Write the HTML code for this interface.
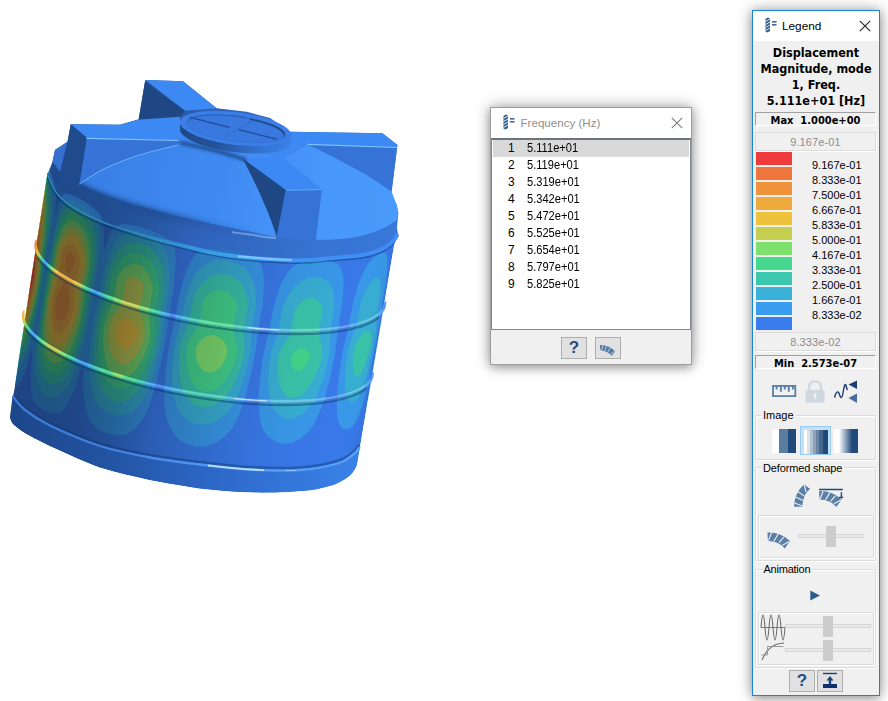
<!DOCTYPE html>
<html><head><meta charset="utf-8"><title>Legend</title>
<style>
html,body{margin:0;padding:0;background:#fff;}
body{width:888px;height:701px;position:relative;overflow:hidden;font-family:"Liberation Sans",sans-serif;}
.dlg{position:absolute;background:#f0f0f0;box-sizing:border-box;box-shadow:0 0 14px rgba(0,0,0,0.38),0 3px 8px rgba(0,0,0,0.18);}
.dlg *{box-sizing:border-box;}
.tbar{position:absolute;left:0;top:0;right:0;background:#fff;}
.ticon{position:absolute;}
.ttl{position:absolute;font-size:12px;line-height:16px;white-space:nowrap;}
.list{position:absolute;background:#fff;border:1px solid #828790;border-top:2px solid #6e737c;}
.row{position:absolute;left:1px;width:196px;height:17px;font-size:12px;line-height:17px;color:#000;}
.row.sel{background:#d9d9d9;}
.row .n{position:absolute;left:15px;}
.row .v{position:absolute;left:33.5px;transform:scaleX(0.925);transform-origin:0 50%;}
.btn{position:absolute;width:26px;height:22px;border:1px solid #adadad;background:#e1e1e1;}
.btn .q{position:absolute;left:0;width:24px;top:0;text-align:center;font-weight:bold;font-size:17px;line-height:20px;color:#1f4e82;}
.lt{position:absolute;left:0;width:126px;text-align:center;font-family:"DejaVu Sans Condensed","DejaVu Sans","Liberation Sans",sans-serif;font-weight:bold;font-size:12.5px;line-height:16px;color:#000;}
.sunk{position:absolute;border-top:1px solid #a0a0a0;border-left:1px solid #a0a0a0;border-right:1px solid #fff;border-bottom:1px solid #fff;}
.mm{position:absolute;text-align:center;font-family:"DejaVu Sans Condensed","DejaVu Sans","Liberation Sans",sans-serif;font-weight:bold;font-size:11px;line-height:12px;color:#000;white-space:nowrap;}
.edit{position:absolute;border:1px solid #dcdcdc;box-shadow:1px 1px 0 #fff;text-align:center;font-size:11px;letter-spacing:0.13px;line-height:19px;color:#8c8c8c;}
.sw{position:absolute;left:3px;width:36px;height:13px;}
.lb{position:absolute;left:59px;font-size:11px;line-height:13px;color:#000;white-space:nowrap;}
.grp{position:absolute;border:1px solid #dcdcdc;box-shadow:1px 1px 0 #fff, inset 1px 1px 0 #fff;}
.gl{position:absolute;font-size:11px;line-height:13px;background:#f0f0f0;padding:0 2px 0 1px;color:#000;white-space:nowrap;}
.trk{position:absolute;height:4px;background:#e7eaea;border:1px solid #d6d6d6;}
.thm{position:absolute;width:10px;height:21px;background:#cccccc;}
</style></head>
<body>
<svg width="888" height="701" viewBox="0 0 888 701" style="position:absolute;left:0;top:0;filter:blur(0.35px)">
<defs>
<clipPath id="cb"><path d="M47.5,173 L10,417.5 C10.5,418.6 10.5,421.4 13.0,424.0 C15.5,426.6 18.8,429.3 25.0,433.0 C31.2,436.7 37.5,440.2 50.0,446.0 C62.5,451.8 83.3,461.8 100.0,467.5 C116.7,473.2 133.3,476.5 150.0,480.0 C166.7,483.5 185.0,486.5 200.0,488.5 C215.0,490.5 227.5,491.3 240.0,492.0 C252.5,492.7 262.9,492.8 275.0,492.5 C287.1,492.2 302.3,491.4 312.5,490.0 C322.7,488.6 329.8,486.4 336.0,484.0 C342.2,481.6 346.6,478.5 350.0,475.5 C353.4,472.5 355.1,469.4 356.5,466.0 C357.9,462.6 358.2,456.8 358.5,455.0 L360,447 L394,246 L397.5,234 Z"/></clipPath>
<filter id="b1" x="-20%" y="-20%" width="140%" height="140%"><feGaussianBlur stdDeviation="0.6"/></filter>
<filter id="dk" x="0" y="0" width="100%" height="100%"><feColorMatrix type="matrix" values="0.56 0 0 0 0  0 0.56 0 0 0  0 0 0.56 0 0  0 0 0 1 0"/></filter>
<filter id="b2" x="-20%" y="-20%" width="140%" height="140%"><feGaussianBlur stdDeviation="1.5"/></filter>
<filter id="b3" x="-20%" y="-20%" width="140%" height="140%"><feGaussianBlur stdDeviation="2.5"/></filter>
<linearGradient id="shade" gradientUnits="userSpaceOnUse" x1="36.2" y1="242.8" x2="384.8" y2="304.2"><stop offset="0.0000" stop-color="#000814" stop-opacity="0.48"/><stop offset="0.1017" stop-color="#000814" stop-opacity="0.49"/><stop offset="0.1921" stop-color="#000814" stop-opacity="0.47"/><stop offset="0.2966" stop-color="#000814" stop-opacity="0.40"/><stop offset="0.4124" stop-color="#000814" stop-opacity="0.27"/><stop offset="0.5424" stop-color="#000814" stop-opacity="0.18"/><stop offset="0.6695" stop-color="#000814" stop-opacity="0.10"/><stop offset="0.7853" stop-color="#000814" stop-opacity="0.05"/><stop offset="0.8955" stop-color="#000814" stop-opacity="0.03"/><stop offset="0.9661" stop-color="#000814" stop-opacity="0.03"/><stop offset="1.0000" stop-color="#000814" stop-opacity="0.07"/></linearGradient>
<linearGradient id="ribg1" gradientUnits="userSpaceOnUse" x1="34.7" y1="242.5" x2="386.3" y2="304.5"><stop offset="0.0000" stop-color="#ee3b3b"/><stop offset="0.0000" stop-color="#ee3b3b"/><stop offset="0.0005" stop-color="#ee753c"/><stop offset="0.0003" stop-color="#ee753c"/><stop offset="0.0043" stop-color="#ee933c"/><stop offset="0.0044" stop-color="#ee933c"/><stop offset="0.0084" stop-color="#eeaa3c"/><stop offset="0.0079" stop-color="#eeaa3c"/><stop offset="0.0119" stop-color="#eec23c"/><stop offset="0.0119" stop-color="#eec23c"/><stop offset="0.0159" stop-color="#c4cf50"/><stop offset="0.0166" stop-color="#c4cf50"/><stop offset="0.0206" stop-color="#80e06e"/><stop offset="0.0205" stop-color="#80e06e"/><stop offset="0.0245" stop-color="#46d88e"/><stop offset="0.0247" stop-color="#46d88e"/><stop offset="0.0287" stop-color="#3cc8ae"/><stop offset="0.0292" stop-color="#3cc8ae"/><stop offset="0.0332" stop-color="#3ab2d8"/><stop offset="0.0341" stop-color="#3ab2d8"/><stop offset="0.0381" stop-color="#3a9cee"/><stop offset="0.0410" stop-color="#3a9cee"/><stop offset="0.0450" stop-color="#3ab2d8"/><stop offset="0.0447" stop-color="#3ab2d8"/><stop offset="0.0487" stop-color="#3cc8ae"/><stop offset="0.0505" stop-color="#3cc8ae"/><stop offset="0.0545" stop-color="#46d88e"/><stop offset="0.0545" stop-color="#46d88e"/><stop offset="0.0585" stop-color="#80e06e"/><stop offset="0.0608" stop-color="#80e06e"/><stop offset="0.0648" stop-color="#c4cf50"/><stop offset="0.0674" stop-color="#c4cf50"/><stop offset="0.0714" stop-color="#eec23c"/><stop offset="0.0767" stop-color="#eec23c"/><stop offset="0.0807" stop-color="#eeaa3c"/><stop offset="0.1244" stop-color="#eeaa3c"/><stop offset="0.1284" stop-color="#eec23c"/><stop offset="0.1363" stop-color="#eec23c"/><stop offset="0.1403" stop-color="#c4cf50"/><stop offset="0.1487" stop-color="#c4cf50"/><stop offset="0.1527" stop-color="#80e06e"/><stop offset="0.1550" stop-color="#80e06e"/><stop offset="0.1590" stop-color="#46d88e"/><stop offset="0.1647" stop-color="#46d88e"/><stop offset="0.1687" stop-color="#3cc8ae"/><stop offset="0.1713" stop-color="#3cc8ae"/><stop offset="0.1753" stop-color="#3ab2d8"/><stop offset="0.1813" stop-color="#3ab2d8"/><stop offset="0.1853" stop-color="#3a9cee"/><stop offset="0.1986" stop-color="#3a9cee"/><stop offset="0.2026" stop-color="#3ab2d8"/><stop offset="0.2128" stop-color="#3ab2d8"/><stop offset="0.2168" stop-color="#3cc8ae"/><stop offset="0.2237" stop-color="#3cc8ae"/><stop offset="0.2277" stop-color="#46d88e"/><stop offset="0.2422" stop-color="#46d88e"/><stop offset="0.2462" stop-color="#80e06e"/><stop offset="0.2651" stop-color="#80e06e"/><stop offset="0.2691" stop-color="#c4cf50"/><stop offset="0.3168" stop-color="#c4cf50"/><stop offset="0.3208" stop-color="#80e06e"/><stop offset="0.3456" stop-color="#80e06e"/><stop offset="0.3496" stop-color="#46d88e"/><stop offset="0.3624" stop-color="#46d88e"/><stop offset="0.3664" stop-color="#3cc8ae"/><stop offset="0.3793" stop-color="#3cc8ae"/><stop offset="0.3833" stop-color="#3ab2d8"/><stop offset="0.3920" stop-color="#3ab2d8"/><stop offset="0.3960" stop-color="#3a9cee"/><stop offset="0.4049" stop-color="#3a9cee"/><stop offset="0.4089" stop-color="#3a7cee"/><stop offset="0.4221" stop-color="#3a7cee"/><stop offset="0.4261" stop-color="#3a9cee"/><stop offset="0.4394" stop-color="#3a9cee"/><stop offset="0.4434" stop-color="#3ab2d8"/><stop offset="0.4611" stop-color="#3ab2d8"/><stop offset="0.4651" stop-color="#3cc8ae"/><stop offset="0.4916" stop-color="#3cc8ae"/><stop offset="0.4956" stop-color="#46d88e"/><stop offset="0.5871" stop-color="#46d88e"/><stop offset="0.5911" stop-color="#3cc8ae"/><stop offset="0.6170" stop-color="#3cc8ae"/><stop offset="0.6210" stop-color="#3ab2d8"/><stop offset="0.6380" stop-color="#3ab2d8"/><stop offset="0.6420" stop-color="#3a9cee"/><stop offset="0.6588" stop-color="#3a9cee"/><stop offset="0.6628" stop-color="#3a7cee"/><stop offset="0.6914" stop-color="#3a7cee"/><stop offset="0.6954" stop-color="#3a9cee"/><stop offset="0.7152" stop-color="#3a9cee"/><stop offset="0.7192" stop-color="#3ab2d8"/><stop offset="0.7498" stop-color="#3ab2d8"/><stop offset="0.7538" stop-color="#3cc8ae"/><stop offset="0.8273" stop-color="#3cc8ae"/><stop offset="0.8313" stop-color="#3ab2d8"/><stop offset="0.8587" stop-color="#3ab2d8"/><stop offset="0.8627" stop-color="#3a9cee"/><stop offset="0.8790" stop-color="#3a9cee"/><stop offset="0.8830" stop-color="#3a7cee"/><stop offset="0.9081" stop-color="#3a7cee"/><stop offset="0.9121" stop-color="#3a9cee"/><stop offset="0.9290" stop-color="#3a9cee"/><stop offset="0.9330" stop-color="#3ab2d8"/><stop offset="0.9801" stop-color="#3ab2d8"/><stop offset="0.9841" stop-color="#3a9cee"/><stop offset="0.9891" stop-color="#3a9cee"/><stop offset="0.9931" stop-color="#3a7cee"/><stop offset="0.9953" stop-color="#3a7cee"/><stop offset="0.9993" stop-color="#3a9cee"/><stop offset="1.0000" stop-color="#3a9cee"/></linearGradient>
<linearGradient id="ribg2" gradientUnits="userSpaceOnUse" x1="22.2" y1="313.4" x2="373.8" y2="375.4"><stop offset="0.0000" stop-color="#ee933c"/><stop offset="0.0000" stop-color="#ee933c"/><stop offset="0.0002" stop-color="#eeaa3c"/><stop offset="0.0009" stop-color="#eeaa3c"/><stop offset="0.0049" stop-color="#eec23c"/><stop offset="0.0060" stop-color="#eec23c"/><stop offset="0.0100" stop-color="#c4cf50"/><stop offset="0.0109" stop-color="#c4cf50"/><stop offset="0.0149" stop-color="#80e06e"/><stop offset="0.0154" stop-color="#80e06e"/><stop offset="0.0194" stop-color="#46d88e"/><stop offset="0.0205" stop-color="#46d88e"/><stop offset="0.0245" stop-color="#3cc8ae"/><stop offset="0.0262" stop-color="#3cc8ae"/><stop offset="0.0302" stop-color="#3ab2d8"/><stop offset="0.0308" stop-color="#3ab2d8"/><stop offset="0.0348" stop-color="#3a9cee"/><stop offset="0.0447" stop-color="#3a9cee"/><stop offset="0.0487" stop-color="#3ab2d8"/><stop offset="0.0505" stop-color="#3ab2d8"/><stop offset="0.0545" stop-color="#3cc8ae"/><stop offset="0.0587" stop-color="#3cc8ae"/><stop offset="0.0627" stop-color="#46d88e"/><stop offset="0.0674" stop-color="#46d88e"/><stop offset="0.0714" stop-color="#80e06e"/><stop offset="0.0815" stop-color="#80e06e"/><stop offset="0.0855" stop-color="#c4cf50"/><stop offset="0.1215" stop-color="#c4cf50"/><stop offset="0.1255" stop-color="#80e06e"/><stop offset="0.1394" stop-color="#80e06e"/><stop offset="0.1434" stop-color="#46d88e"/><stop offset="0.1518" stop-color="#46d88e"/><stop offset="0.1558" stop-color="#3cc8ae"/><stop offset="0.1647" stop-color="#3cc8ae"/><stop offset="0.1687" stop-color="#3ab2d8"/><stop offset="0.1746" stop-color="#3ab2d8"/><stop offset="0.1786" stop-color="#3a9cee"/><stop offset="0.2056" stop-color="#3a9cee"/><stop offset="0.2096" stop-color="#3ab2d8"/><stop offset="0.2200" stop-color="#3ab2d8"/><stop offset="0.2240" stop-color="#3cc8ae"/><stop offset="0.2422" stop-color="#3cc8ae"/><stop offset="0.2462" stop-color="#46d88e"/><stop offset="0.2768" stop-color="#46d88e"/><stop offset="0.2808" stop-color="#80e06e"/><stop offset="0.3087" stop-color="#80e06e"/><stop offset="0.3127" stop-color="#46d88e"/><stop offset="0.3456" stop-color="#46d88e"/><stop offset="0.3496" stop-color="#3cc8ae"/><stop offset="0.3666" stop-color="#3cc8ae"/><stop offset="0.3706" stop-color="#3ab2d8"/><stop offset="0.3835" stop-color="#3ab2d8"/><stop offset="0.3875" stop-color="#3a9cee"/><stop offset="0.4006" stop-color="#3a9cee"/><stop offset="0.4046" stop-color="#3a7cee"/><stop offset="0.4264" stop-color="#3a7cee"/><stop offset="0.4304" stop-color="#3a9cee"/><stop offset="0.4481" stop-color="#3a9cee"/><stop offset="0.4521" stop-color="#3ab2d8"/><stop offset="0.4786" stop-color="#3ab2d8"/><stop offset="0.4826" stop-color="#3cc8ae"/><stop offset="0.6000" stop-color="#3cc8ae"/><stop offset="0.6040" stop-color="#3ab2d8"/><stop offset="0.6296" stop-color="#3ab2d8"/><stop offset="0.6336" stop-color="#3a9cee"/><stop offset="0.6547" stop-color="#3a9cee"/><stop offset="0.6587" stop-color="#3a7cee"/><stop offset="0.6954" stop-color="#3a7cee"/><stop offset="0.6994" stop-color="#3a9cee"/><stop offset="0.7269" stop-color="#3a9cee"/><stop offset="0.7309" stop-color="#3ab2d8"/><stop offset="0.8496" stop-color="#3ab2d8"/><stop offset="0.8536" stop-color="#3a9cee"/><stop offset="0.8762" stop-color="#3a9cee"/><stop offset="0.8802" stop-color="#3a7cee"/><stop offset="0.9105" stop-color="#3a7cee"/><stop offset="0.9145" stop-color="#3a9cee"/><stop offset="0.9333" stop-color="#3a9cee"/><stop offset="0.9373" stop-color="#3ab2d8"/><stop offset="0.9778" stop-color="#3ab2d8"/><stop offset="0.9818" stop-color="#3a9cee"/><stop offset="0.9884" stop-color="#3a9cee"/><stop offset="0.9924" stop-color="#3a7cee"/><stop offset="0.9953" stop-color="#3a7cee"/><stop offset="0.9993" stop-color="#3a9cee"/><stop offset="1.0000" stop-color="#3a9cee"/></linearGradient>
<linearGradient id="rimg" gradientUnits="userSpaceOnUse" x1="10" y1="420" x2="357" y2="470">
 <stop offset="0" stop-color="#1d4689"/><stop offset="0.3" stop-color="#2254a3"/><stop offset="0.6" stop-color="#2d68c8"/><stop offset="1" stop-color="#3a82e8"/>
</linearGradient>
<linearGradient id="domeg" gradientUnits="userSpaceOnUse" x1="80" y1="160" x2="390" y2="215">
 <stop offset="0" stop-color="#397ee4"/><stop offset="0.45" stop-color="#3f8af2"/><stop offset="0.75" stop-color="#4796fa"/><stop offset="1" stop-color="#4a9afc"/>
</linearGradient>
<linearGradient id="lidrim" gradientUnits="userSpaceOnUse" x1="47" y1="180" x2="395" y2="240">
 <stop offset="0" stop-color="#1f4a8c"/><stop offset="0.16" stop-color="#204b8e"/><stop offset="0.30" stop-color="#26559f"/><stop offset="0.44" stop-color="#2f63bb"/><stop offset="0.58" stop-color="#3269c3"/><stop offset="0.8" stop-color="#3774d2"/><stop offset="1" stop-color="#3878d8"/>
</linearGradient>
<linearGradient id="lipg" gradientUnits="userSpaceOnUse" x1="120" y1="0" x2="400" y2="0">
 <stop offset="0" stop-color="#36a0e0" stop-opacity="0"/><stop offset="0.25" stop-color="#38a4ea" stop-opacity="0.7"/><stop offset="0.45" stop-color="#3ea2f5" stop-opacity="1"/><stop offset="0.7" stop-color="#4090f5" stop-opacity="1"/><stop offset="1" stop-color="#418cf5" stop-opacity="1"/>
</linearGradient>
<linearGradient id="softg" gradientUnits="userSpaceOnUse" x1="60" y1="0" x2="260" y2="0">
 <stop offset="0" stop-color="#1f4a8c" stop-opacity="1"/><stop offset="0.45" stop-color="#214e96" stop-opacity="0.9"/><stop offset="1" stop-color="#2b60b4" stop-opacity="0"/>
</linearGradient>
<linearGradient id="rimhg" gradientUnits="userSpaceOnUse" x1="10" y1="0" x2="360" y2="0">
 <stop offset="0" stop-color="#3a78d4"/><stop offset="0.3" stop-color="#4084e0"/><stop offset="0.55" stop-color="#4c98f4"/><stop offset="1" stop-color="#55a4f8"/>
</linearGradient>
<linearGradient id="ribbr" gradientUnits="userSpaceOnUse" x1="130" y1="0" x2="300" y2="0">
 <stop offset="0" stop-color="#c8f4ff" stop-opacity="0"/><stop offset="1" stop-color="#c8f4ff" stop-opacity="0.2"/>
</linearGradient>
<linearGradient id="hubwall" gradientUnits="userSpaceOnUse" x1="180" y1="125" x2="290" y2="145">
 <stop offset="0" stop-color="#1f4784"/><stop offset="0.35" stop-color="#24529a"/><stop offset="0.7" stop-color="#3270cc"/><stop offset="1" stop-color="#3a80e6"/>
</linearGradient>
</defs>
<g clip-path="url(#cb)">
<path d="M47.5,173 L10,417.5 C10.5,418.6 10.5,421.4 13.0,424.0 C15.5,426.6 18.8,429.3 25.0,433.0 C31.2,436.7 37.5,440.2 50.0,446.0 C62.5,451.8 83.3,461.8 100.0,467.5 C116.7,473.2 133.3,476.5 150.0,480.0 C166.7,483.5 185.0,486.5 200.0,488.5 C215.0,490.5 227.5,491.3 240.0,492.0 C252.5,492.7 262.9,492.8 275.0,492.5 C287.1,492.2 302.3,491.4 312.5,490.0 C322.7,488.6 329.8,486.4 336.0,484.0 C342.2,481.6 346.6,478.5 350.0,475.5 C353.4,472.5 355.1,469.4 356.5,466.0 C357.9,462.6 358.2,456.8 358.5,455.0 L360,447 L394,246 L397.5,234 Z" fill="#3a7cee"/>
<g id="cont">
<path d="M46.3,162.8 50.2,163.3 50.0,167.0 50.5,171.2 55.5,188.6 56.1,199.4 54.8,218.4 58.8,203.7 61.4,197.4 62.9,195.2 64.4,194.1 65.9,193.6 68.9,194.0 76.8,197.1 85.4,202.1 94.8,209.0 98.6,212.7 100.5,215.3 102.4,219.5 103.7,226.4 104.0,250.1 109.8,235.2 112.6,230.0 114.7,227.7 117.6,225.6 121.3,224.4 124.0,224.2 129.3,224.5 139.9,226.9 150.8,230.3 161.8,234.9 166.7,237.9 169.8,240.5 172.5,244.0 174.5,248.6 175.5,255.5 175.5,266.3 173.1,291.9 168.7,317.0 164.7,345.3 156.1,383.3 150.0,403.4 147.3,410.4 144.5,415.9 140.1,422.5 134.6,428.9 129.9,432.6 126.0,434.3 123.0,435.0 117.6,435.4 111.9,434.6 106.4,433.1 98.4,429.1 93.9,425.3 91.2,421.9 89.0,418.0 87.0,412.6 84.0,398.8 83.2,387.4 83.4,366.5 80.1,371.5 74.1,390.0 67.2,404.1 64.1,408.7 61.3,411.4 58.8,412.9 56.0,413.7 52.6,413.6 48.3,412.4 41.2,408.7 35.9,404.0 32.8,398.5 31.3,392.5 30.8,384.7 31.1,368.6 32.3,352.8 31.8,348.6 27.5,363.6 23.5,375.2 20.4,382.3 18.0,385.5 16.5,386.1 15.6,385.9 13.5,384.0 12.5,381.2 12.5,377.2 5.5,375.4 0.9,373.5 38.1,162.8 46.3,162.8ZM216.7,248.7 230.3,250.1 245.2,253.5 253.8,257.2 259.1,261.7 261.3,265.3 262.3,268.4 263.6,277.5 263.9,286.6 262.6,304.4 258.0,331.0 255.2,353.3 251.8,371.0 244.8,398.9 241.9,407.6 237.4,418.7 233.3,426.4 229.1,432.0 225.4,435.8 218.3,441.3 213.8,443.8 208.2,445.8 201.9,446.7 195.7,446.5 186.7,444.2 180.1,440.3 175.6,435.9 173.1,432.5 168.3,423.7 165.9,416.1 164.6,406.7 164.3,391.3 165.3,376.1 167.9,353.7 170.1,340.4 175.2,318.5 179.7,293.4 183.2,280.3 186.5,270.3 191.9,259.2 194.7,255.2 197.6,252.7 201.8,250.5 205.3,249.5 211.7,248.7 216.7,248.7ZM311.3,260.3 323.5,260.0 332.8,261.7 336.8,263.6 339.0,265.5 340.7,268.2 342.2,272.3 343.2,278.5 343.6,284.6 342.6,302.0 337.9,330.1 335.0,353.5 330.5,375.8 324.7,398.2 319.2,413.3 313.1,425.6 307.2,433.0 299.2,439.3 291.3,442.8 286.1,443.7 281.0,443.4 278.5,442.8 273.6,440.6 267.8,436.0 263.5,429.9 262.1,426.9 260.5,421.0 259.0,410.3 258.6,396.9 260.3,376.1 262.7,358.3 264.5,349.5 269.0,331.8 273.5,306.7 278.5,290.6 282.0,281.8 288.1,271.7 293.4,266.4 296.5,264.4 302.4,262.1 311.3,260.3ZM375.8,256.0 380.7,253.5 383.0,253.0 385.1,253.1 386.1,253.8 387.2,255.7 387.8,261.3 387.4,269.3 385.3,285.7 377.0,336.7 368.4,381.6 364.6,398.0 361.2,409.7 357.7,418.4 353.8,424.8 349.8,428.4 345.9,429.6 343.3,428.8 342.0,427.8 339.5,424.4 337.8,418.6 337.0,411.2 336.8,400.4 337.4,388.9 341.9,355.2 343.7,346.3 348.4,328.2 353.0,303.1 358.6,283.4 362.4,274.0 366.6,265.9 370.6,260.6 375.8,256.0ZM404.9,239.7 408.3,240.1 377.6,414.1 376.4,414.1 373.1,412.2 371.1,409.5 369.4,405.2 368.3,398.1 378.8,335.0 394.4,250.1 396.6,245.9 399.4,242.4 402.1,240.5 404.9,239.7Z" fill="#3a9cee" fill-rule="evenodd"/>
<path d="M39.8,167.7 44.6,167.6 49.3,168.2 49.3,174.0 52.2,189.4 52.9,197.5 52.3,214.6 50.6,230.4 42.1,289.6 38.7,307.1 33.3,331.2 28.3,349.2 24.3,360.2 18.5,370.5 16.6,372.8 14.9,373.5 13.8,372.2 13.9,369.4 10.4,368.4 7.1,366.5 3.0,362.0 37.1,168.2 39.8,167.7ZM73.1,200.9 81.0,204.8 88.2,209.9 93.6,215.5 97.2,221.9 98.8,229.0 99.4,240.4 99.2,248.3 97.6,266.6 87.1,327.3 81.3,351.8 76.6,367.3 71.1,380.8 68.2,385.9 65.5,389.4 62.4,392.4 57.5,395.7 55.2,396.7 51.0,397.3 48.7,397.0 45.4,395.6 42.3,392.7 38.5,385.9 36.4,378.3 35.2,370.3 34.9,361.0 35.7,347.1 37.2,331.4 42.3,291.5 45.7,277.0 51.9,241.9 56.6,222.1 60.8,208.7 63.9,202.8 65.9,201.0 67.8,200.3 69.5,200.2 73.1,200.9ZM134.6,233.2 144.1,235.3 152.2,238.7 160.2,244.0 162.7,246.7 164.7,249.8 167.3,256.6 169.4,267.9 169.5,278.7 168.8,290.9 164.5,316.0 162.4,335.5 160.4,347.4 153.8,373.5 148.8,387.7 145.7,394.4 141.3,402.0 137.4,407.0 134.0,410.2 130.5,412.4 124.1,414.8 121.1,415.3 115.3,415.3 109.8,413.9 107.2,412.6 102.2,409.1 99.1,405.9 96.1,401.7 92.6,394.2 90.4,384.4 89.3,369.3 89.5,356.8 91.0,340.0 93.7,318.9 99.4,295.9 103.5,272.2 106.8,260.9 110.3,251.2 115.7,241.4 120.3,236.1 122.1,234.9 126.0,233.4 130.5,232.9 134.6,233.2ZM219.6,259.8 225.4,260.1 231.5,261.2 240.2,264.5 245.2,268.1 248.2,271.5 250.6,275.2 253.3,281.0 254.6,285.7 255.3,291.8 255.8,305.3 251.5,330.5 250.3,351.4 246.7,369.1 240.8,388.0 236.6,398.1 231.5,406.6 226.3,413.3 223.3,416.3 219.0,419.7 216.0,421.4 209.0,423.9 204.5,424.4 199.6,424.3 193.6,423.0 190.6,421.8 185.0,418.0 179.8,411.8 177.5,407.4 175.8,402.8 173.5,394.6 172.1,383.7 172.3,366.9 173.6,351.9 176.0,338.6 181.7,319.9 185.8,296.2 189.5,285.9 193.3,277.9 195.7,273.8 198.5,270.4 205.9,263.9 212.7,260.9 219.6,259.8ZM307.8,278.0 313.0,276.9 315.6,276.9 320.4,277.6 322.7,278.4 327.1,281.0 329.1,283.0 331.1,285.9 332.5,289.7 333.8,295.9 334.6,305.9 330.3,331.0 329.6,352.8 327.2,364.7 322.9,379.6 317.9,393.2 312.9,402.4 306.7,410.1 301.1,414.8 295.7,417.6 293.1,418.4 288.0,418.9 283.0,417.6 278.2,414.4 273.8,408.8 271.7,404.8 270.2,400.4 268.6,391.4 268.2,381.0 268.4,370.6 269.5,360.2 271.7,349.9 278.2,332.3 281.9,310.1 283.9,304.3 288.2,295.8 294.3,286.8 297.4,283.9 301.5,281.0 307.8,278.0ZM374.3,278.6 376.4,277.8 377.5,277.9 379.3,279.8 380.5,284.1 380.8,289.9 380.3,295.4 376.5,317.5 375.8,332.0 373.8,345.0 367.2,374.5 363.0,387.8 360.1,394.2 357.3,398.7 353.3,402.2 350.7,402.3 348.3,400.4 346.9,397.8 345.4,392.6 344.9,387.1 345.4,368.7 347.6,351.2 350.2,342.0 356.4,326.3 360.4,304.2 361.7,299.6 365.2,291.5 368.5,285.4 372.2,280.4 374.3,278.6ZM400.9,264.9 402.8,264.6 403.9,265.1 382.4,386.8 381.2,386.8 379.0,385.5 378.0,384.2 375.8,377.8 374.9,368.5 375.3,358.2 382.6,316.6 387.0,305.1 390.6,282.9 392.0,278.6 395.5,271.1 398.8,266.6 400.9,264.9Z" fill="#3ab2d8" fill-rule="evenodd"/>
<path d="M41.4,172.6 48.5,172.8 48.4,179.0 50.2,195.7 50.3,207.4 49.6,220.5 47.4,241.0 40.4,289.6 32.3,326.7 28.4,340.0 23.9,352.1 20.3,358.1 18.2,360.1 16.3,360.9 15.8,360.0 15.9,358.0 12.4,356.8 10.3,355.3 7.2,351.9 5.3,348.8 36.1,174.3 41.4,172.6ZM75.0,207.1 81.9,210.9 87.2,215.5 90.9,220.6 93.5,226.6 94.9,233.7 95.9,243.7 95.6,256.3 94.8,267.0 90.5,290.6 85.2,323.3 81.0,340.6 76.4,356.1 71.2,368.1 67.9,373.9 65.0,378.0 62.3,380.8 59.8,382.5 57.1,383.7 53.3,384.2 49.5,383.3 47.8,382.4 44.6,379.5 41.8,375.2 39.6,368.5 38.3,358.4 38.2,347.4 38.8,334.4 40.4,320.5 43.8,296.2 52.8,246.1 58.4,223.7 62.4,213.6 64.5,209.9 66.3,207.9 68.2,206.7 69.9,206.3 75.0,207.1ZM133.5,242.2 140.0,242.8 148.0,246.1 153.2,250.1 158.0,256.4 161.0,262.7 163.0,269.4 164.0,278.9 164.2,291.3 160.0,314.9 158.7,334.6 157.3,343.6 153.2,359.5 147.3,376.5 144.6,382.0 140.7,388.1 136.9,392.8 133.3,396.3 129.9,398.7 126.7,400.4 123.5,401.4 117.7,401.8 112.2,400.4 107.1,397.3 102.4,392.2 100.3,388.7 98.2,383.6 95.4,373.2 94.2,363.3 94.3,349.1 95.4,333.8 97.5,318.8 103.5,297.5 107.6,273.8 111.6,262.7 116.1,253.6 119.5,249.3 125.8,244.4 128.7,243.1 133.5,242.2ZM216.5,274.5 219.8,274.2 226.0,274.7 231.9,276.5 234.7,278.0 240.2,282.5 242.5,286.2 244.7,291.3 247.1,299.9 247.8,306.0 243.6,329.7 244.4,344.9 244.2,352.3 242.1,362.6 238.8,372.8 232.4,387.2 228.0,394.2 222.5,400.1 215.5,404.6 208.9,406.7 202.6,407.0 196.6,405.5 191.0,401.9 185.8,396.0 182.8,390.4 180.8,383.9 179.7,376.9 179.0,363.3 179.6,351.6 180.7,344.2 181.8,339.8 189.2,321.4 193.0,299.2 194.5,294.9 199.5,286.7 206.4,279.0 210.3,276.5 216.5,274.5ZM307.1,298.7 311.8,298.0 314.3,298.5 316.5,299.6 320.8,303.4 322.5,306.9 322.7,309.8 318.4,332.0 318.8,334.9 321.9,346.4 322.3,350.7 322.1,355.1 320.5,362.5 317.4,371.5 313.8,379.0 308.2,388.3 304.2,392.8 299.5,396.2 295.4,397.5 291.7,397.8 289.2,397.3 287.0,396.2 284.5,394.1 282.4,390.9 280.5,386.2 278.8,380.2 277.6,371.5 277.5,365.0 278.3,357.6 279.4,353.1 281.8,347.7 291.0,332.6 295.0,309.0 297.5,305.4 300.7,302.4 303.7,300.3 307.1,298.7ZM364.2,332.1 367.1,330.7 369.2,331.2 370.1,332.1 371.4,336.6 371.0,343.4 367.6,357.3 363.7,368.3 359.8,374.9 357.7,376.7 356.5,376.8 355.3,376.0 354.3,374.1 352.8,366.6 352.8,358.2 353.7,351.0 354.8,346.4 357.3,340.9 361.2,335.1 364.2,332.1ZM392.0,318.2 394.5,318.6 387.1,360.4 385.8,360.6 384.7,360.0 383.8,358.5 382.3,352.8 382.0,343.9 383.0,333.4 384.3,327.5 386.3,323.2 389.4,319.5 392.0,318.2Z" fill="#3cc8ae" fill-rule="evenodd"/>
<path d="M44.1,177.6 47.6,177.9 47.4,183.3 48.1,197.8 48.2,213.2 46.5,234.6 40.2,282.5 36.0,304.3 29.8,328.7 23.5,345.2 20.6,350.1 18.3,351.7 17.5,351.1 17.5,348.6 14.1,347.4 11.9,346.0 8.8,342.7 6.9,339.5 34.8,181.7 38.9,178.9 44.1,177.6ZM73.5,212.7 77.4,214.1 82.6,218.0 86.0,222.2 89.1,228.7 91.3,236.8 92.5,243.7 92.7,255.0 92.2,267.5 87.9,289.5 83.1,320.8 79.5,335.2 74.6,350.5 70.5,359.5 64.6,367.8 59.5,372.1 57.3,373.2 53.2,373.6 49.6,372.2 46.4,369.1 43.8,363.9 41.9,356.0 40.9,346.1 40.9,336.0 43.4,309.4 45.6,294.3 50.7,268.1 54.1,247.2 57.8,233.3 61.0,224.0 64.7,217.4 68.7,213.5 70.5,212.8 73.5,212.7ZM133.3,253.0 138.1,253.4 143.5,255.3 148.7,259.0 152.6,263.5 155.3,268.9 157.4,276.4 158.9,285.3 159.0,290.0 154.9,313.6 154.8,330.6 154.2,338.2 151.9,348.4 148.2,359.8 141.9,373.6 139.6,377.3 135.9,381.8 132.4,384.7 129.1,386.7 125.9,388.0 119.9,388.8 114.4,387.5 109.4,384.1 104.9,378.4 102.0,372.4 100.0,365.4 99.1,358.8 98.7,344.5 99.3,332.1 101.0,320.2 107.9,299.1 111.7,276.9 113.1,272.7 117.3,264.8 122.9,257.4 126.7,254.7 129.6,253.6 133.3,253.0ZM219.5,290.2 223.2,290.6 226.1,291.6 228.9,293.2 234.2,298.6 236.6,303.2 236.9,306.3 232.6,328.4 233.0,331.5 236.5,344.0 237.2,348.5 237.0,353.1 235.3,360.4 231.9,369.0 227.0,377.5 222.3,383.7 218.5,387.4 215.0,389.7 211.7,391.0 205.3,391.7 202.3,391.2 199.4,390.0 196.6,388.2 193.9,385.4 191.5,381.4 189.1,374.8 187.0,365.3 186.3,357.4 186.9,348.4 187.7,344.0 189.4,339.5 199.7,323.4 202.9,302.6 203.7,299.7 206.5,296.0 210.1,293.3 215.1,291.0 219.5,290.2ZM298.6,348.9 300.4,348.3 303.0,348.2 305.4,348.9 307.6,350.4 308.5,351.6 309.5,353.5 309.7,355.9 308.1,361.9 304.6,367.3 301.7,369.8 299.0,370.9 296.4,370.9 294.1,369.6 292.0,366.7 290.9,362.2 290.8,359.3 291.3,356.3 292.9,353.4 294.7,351.3 298.6,348.9Z" fill="#46d88e" fill-rule="evenodd"/>
<path d="M45.3,183.9 46.5,184.1 46.2,189.8 46.4,210.5 45.9,222.9 44.4,239.2 38.7,284.3 34.9,303.0 29.1,324.7 26.7,331.3 23.1,339.0 20.8,342.8 19.1,343.9 18.7,343.1 18.8,341.3 15.4,340.0 13.1,338.2 10.3,334.4 8.5,330.4 33.2,190.4 36.2,187.5 39.0,185.5 41.6,184.4 45.3,183.9ZM76.2,220.9 79.7,223.4 83.0,227.6 86.1,233.7 87.7,238.2 88.8,243.1 89.6,251.3 89.8,261.7 89.4,267.8 85.2,288.3 81.0,318.3 78.1,329.7 74.9,339.4 70.5,350.2 66.6,356.4 61.5,361.3 59.2,362.6 55.0,363.3 51.3,362.1 48.2,358.7 45.7,353.2 43.9,344.7 43.3,337.9 43.4,329.6 44.6,313.7 46.3,299.9 52.3,269.3 55.9,247.0 60.2,233.5 63.1,226.8 67.2,222.0 70.9,220.1 72.7,219.9 76.2,220.9ZM133.5,264.0 136.2,264.1 138.9,264.8 141.6,266.3 144.1,268.4 148.8,274.8 152.5,285.2 152.8,289.9 148.7,312.0 150.1,329.4 150.0,335.5 148.6,342.9 146.3,350.0 143.1,357.6 138.8,365.4 134.8,371.0 131.3,374.2 128.0,376.1 124.9,377.1 122.0,377.4 116.4,376.1 113.9,374.6 109.8,370.4 107.1,365.6 105.4,360.1 103.6,347.9 103.2,338.3 103.7,329.0 105.7,318.8 113.4,301.1 117.1,278.9 118.2,276.1 120.9,272.0 125.3,267.6 130.5,264.7 133.5,264.0ZM208.9,335.6 212.2,335.2 215.2,335.6 218.1,336.7 220.9,338.5 223.6,341.1 226.0,344.9 227.2,348.9 227.4,351.9 225.3,359.2 223.0,363.4 220.9,366.2 218.8,368.4 215.2,370.9 211.9,372.2 208.7,372.5 205.7,372.0 202.8,370.4 200.2,367.6 197.8,363.4 197.0,361.0 196.0,356.2 195.8,353.2 196.5,347.2 198.4,343.0 202.1,339.0 205.6,336.8 208.9,335.6Z" fill="#80e06e" fill-rule="evenodd"/>
<path d="M42.6,191.1 45.3,191.1 44.3,222.3 42.9,238.9 37.9,281.6 34.1,300.3 28.7,320.3 24.7,330.0 22.3,334.3 20.4,336.1 20.0,335.6 20.1,333.9 16.7,332.5 13.6,329.4 11.7,326.1 10.1,321.7 31.8,198.8 36.3,193.8 39.0,192.2 42.6,191.1ZM74.3,227.9 76.7,229.2 80.0,232.6 82.9,237.5 84.3,241.4 86.4,253.7 87.0,261.9 86.7,266.6 82.3,286.9 79.0,314.2 75.3,328.4 70.3,340.5 65.8,348.6 63.2,351.4 60.8,353.1 56.6,354.2 52.9,353.0 49.9,349.5 47.6,344.1 46.5,339.0 46.0,332.7 46.0,323.2 46.7,310.8 47.8,301.1 54.1,270.7 57.3,249.7 58.8,244.1 62.0,236.5 65.7,230.2 67.7,228.4 69.6,227.5 71.4,227.3 74.3,227.9ZM130.8,277.2 133.9,277.0 136.6,277.8 139.3,279.3 141.7,281.7 143.8,285.8 143.7,288.9 139.9,306.4 139.6,309.5 140.2,312.7 144.0,326.2 144.7,331.0 144.5,335.6 143.2,341.5 141.2,347.1 137.9,353.2 134.6,357.7 130.6,361.5 127.3,363.6 124.2,364.6 121.3,364.6 118.7,363.6 116.2,361.6 113.9,358.6 111.8,354.6 110.0,349.2 108.6,341.7 108.3,335.4 108.5,329.2 109.6,323.3 111.9,317.8 121.8,304.0 122.8,299.6 125.3,281.7 127.0,279.1 130.8,277.2Z" fill="#c4cf50" fill-rule="evenodd"/>
<path d="M39.7,198.2 41.7,197.6 44.1,197.7 42.2,230.7 37.1,278.8 33.8,296.2 28.7,314.7 25.1,323.9 23.0,327.5 21.5,328.7 21.4,326.7 18.0,325.2 14.9,321.9 13.1,318.5 11.5,313.8 29.9,209.3 34.8,202.1 37.6,199.4 39.7,198.2ZM71.9,234.6 73.7,235.1 77.1,238.0 80.1,243.6 82.7,252.8 83.8,260.4 83.7,265.2 79.1,285.4 76.7,309.9 75.6,315.8 73.6,322.8 70.3,330.8 65.3,339.5 62.7,342.7 60.3,344.4 58.2,345.0 56.3,344.9 54.5,344.0 52.9,342.5 51.5,340.2 50.3,336.8 49.4,332.1 48.6,317.8 49.9,301.0 51.5,292.1 56.0,273.7 58.7,254.1 60.0,248.3 63.6,240.9 66.1,237.6 68.3,235.7 70.1,234.8 71.9,234.6ZM126.5,318.0 129.4,318.7 132.0,320.3 134.4,323.1 136.6,327.4 137.4,333.7 135.9,339.4 132.8,344.8 130.1,347.5 128.7,348.2 126.9,349.1 124.0,349.3 121.4,348.3 118.9,346.0 116.8,342.2 115.2,335.4 115.2,329.9 116.2,325.6 118.6,321.7 120.8,319.7 123.3,318.5 126.5,318.0Z" fill="#eec23c" fill-rule="evenodd"/>
<path d="M40.1,205.9 42.7,205.7 40.7,232.7 35.7,280.5 33.1,293.4 29.1,307.8 25.7,317.5 23.7,321.2 22.7,322.0 22.6,320.1 19.2,318.6 16.1,315.1 14.4,311.3 12.9,305.8 27.4,223.2 30.4,216.4 33.7,210.9 36.2,208.1 40.1,205.9ZM70.3,243.4 72.2,243.9 73.9,245.0 77.0,249.6 79.7,257.6 80.1,263.4 75.1,283.4 73.6,306.8 71.5,317.0 68.2,325.0 64.9,329.9 62.5,332.3 60.2,333.5 58.3,333.6 56.5,332.8 54.9,331.1 53.6,328.3 52.5,324.3 51.5,313.7 52.2,302.6 53.8,293.8 59.2,274.2 61.3,255.8 62.2,251.5 64.1,247.8 66.5,245.2 68.5,243.8 70.3,243.4Z" fill="#eeaa3c" fill-rule="evenodd"/>
<path d="M39.1,214.9 41.1,214.7 34.8,279.1 32.8,289.2 30.1,299.7 26.1,311.5 23.8,315.6 23.7,313.9 20.3,312.2 17.3,308.2 15.7,303.5 14.7,295.7 24.2,241.4 28.9,229.1 32.6,221.3 35.9,217.0 39.1,214.9ZM69.2,252.6 70.6,252.8 72.8,254.7 74.2,257.1 74.9,260.7 73.8,265.0 71.4,270.5 68.8,273.8 66.9,273.8 65.8,269.6 65.3,262.1 65.5,258.5 66.5,254.2 67.5,253.2 69.2,252.6ZM64.8,282.6 65.5,281.9 67.1,283.8 68.2,288.4 69.2,296.4 69.1,306.1 68.0,312.0 65.7,317.2 62.5,320.8 60.4,321.4 58.6,320.7 57.1,318.7 55.9,315.1 55.3,308.7 55.6,303.2 56.8,297.4 58.7,292.0 60.8,287.5 63.3,283.7 64.8,282.6Z" fill="#ee933c" fill-rule="evenodd"/>
<path d="M37.6,226.8 39.0,226.6 33.9,277.5 30.3,294.1 27.3,303.2 24.8,308.6 24.8,307.3 21.5,305.3 19.2,301.2 17.4,293.9 16.5,285.1 22.3,252.5 31.7,233.4 35.0,228.6 37.6,226.8Z" fill="#ee753c" fill-rule="evenodd"/>
<path d="M35.5,241.6 36.4,241.6 32.9,277.3 29.8,290.8 27.5,297.7 26.2,300.1 26.3,299.1 24.0,297.9 22.1,295.2 19.7,287.8 18.9,278.3 19.8,267.8 22.2,259.1 26.2,251.3 30.9,244.9 33.8,242.3 35.5,241.6Z" fill="#ee3b3b" fill-rule="evenodd"/>
</g>
<path d="M47.5,173 L10,417.5 C10.5,418.6 10.5,421.4 13.0,424.0 C15.5,426.6 18.8,429.3 25.0,433.0 C31.2,436.7 37.5,440.2 50.0,446.0 C62.5,451.8 83.3,461.8 100.0,467.5 C116.7,473.2 133.3,476.5 150.0,480.0 C166.7,483.5 185.0,486.5 200.0,488.5 C215.0,490.5 227.5,491.3 240.0,492.0 C252.5,492.7 262.9,492.8 275.0,492.5 C287.1,492.2 302.3,491.4 312.5,490.0 C322.7,488.6 329.8,486.4 336.0,484.0 C342.2,481.6 346.6,478.5 350.0,475.5 C353.4,472.5 355.1,469.4 356.5,466.0 C357.9,462.6 358.2,456.8 358.5,455.0 L360,447 L394,246 L397.5,234 Z" fill="url(#shade)"/>
</g>
<path d="M12.5,396.0 C14.6,398.3 18.8,405.1 25.0,410.0 C31.2,414.9 37.5,419.5 50.0,425.5 C62.5,431.5 83.3,440.7 100.0,446.0 C116.7,451.3 133.3,454.4 150.0,457.5 C166.7,460.6 183.3,462.5 200.0,464.5 C216.7,466.5 233.3,468.6 250.0,469.5 C266.7,470.4 285.4,471.0 300.0,470.0 C314.6,469.0 328.8,466.0 337.5,463.5 C346.2,461.0 348.8,457.8 352.5,455.0 C356.2,452.2 358.8,448.3 360.0,447.0 L358.5,455 L356.5,466.0 L350.0,475.5 L336.0,484.0 L312.5,490.0 L275.0,492.5 L240.0,492.0 L200.0,488.5 L150.0,480.0 L100.0,467.5 L50.0,446.0 L25.0,433.0 L13.0,424.0 L10.0,417.5 L12.5,396Z" fill="url(#rimg)"/>
<path d="M12.5,396.0 C14.6,398.3 18.8,405.1 25.0,410.0 C31.2,414.9 37.5,419.5 50.0,425.5 C62.5,431.5 83.3,440.7 100.0,446.0 C116.7,451.3 133.3,454.4 150.0,457.5 C166.7,460.6 183.3,462.5 200.0,464.5 C216.7,466.5 233.3,468.6 250.0,469.5 C266.7,470.4 285.4,471.0 300.0,470.0 C314.6,469.0 328.8,466.0 337.5,463.5 C346.2,461.0 348.8,457.8 352.5,455.0 C356.2,452.2 358.8,448.3 360.0,447.0" fill="none" stroke="#123570" stroke-opacity="0.45" stroke-width="2.6" transform="translate(0,-2.4)" filter="url(#b1)" clip-path="url(#cb)"/>
<path d="M12.5,396.0 C14.6,398.3 18.8,405.1 25.0,410.0 C31.2,414.9 37.5,419.5 50.0,425.5 C62.5,431.5 83.3,440.7 100.0,446.0 C116.7,451.3 133.3,454.4 150.0,457.5 C166.7,460.6 183.3,462.5 200.0,464.5 C216.7,466.5 233.3,468.6 250.0,469.5 C266.7,470.4 285.4,471.0 300.0,470.0 C314.6,469.0 328.8,466.0 337.5,463.5 C346.2,461.0 348.8,457.8 352.5,455.0 C356.2,452.2 358.8,448.3 360.0,447.0" fill="none" stroke="url(#rimhg)" stroke-width="2.3" filter="url(#b1)"/>
<path d="M208.0,465.5 C210.8,465.8 218.8,466.8 225.0,467.4 C231.2,468.0 238.5,468.7 245.0,469.2 C251.5,469.7 260.8,470.0 264.0,470.2" fill="none" stroke="#cfeeff" stroke-width="1.8" filter="url(#b1)" opacity="0.85"/>
<path d="M286.0,470.5 C287.7,470.4 294.3,470.2 296.0,470.2" fill="none" stroke="#bfe6ff" stroke-width="1.2" filter="url(#b1)" opacity="0.6"/>
<path d="M37.7,256.2 C38.2,256.8 39.5,258.9 40.5,260.2 C41.6,261.6 42.9,262.9 44.2,264.3 C45.6,265.6 47.1,267.0 48.7,268.4 C50.3,269.7 52.1,271.1 53.9,272.5 C55.8,273.9 57.8,275.2 59.9,276.6 C62.1,278.0 64.3,279.3 66.7,280.7 C69.0,282.0 71.5,283.4 74.1,284.7 C76.7,286.1 79.4,287.4 82.2,288.7 C85.0,290.0 87.9,291.3 90.9,292.6 C93.9,293.9 97.0,295.2 100.2,296.5 C103.4,297.7 106.6,299.0 110.0,300.2 C113.3,301.4 116.8,302.6 120.3,303.8 C123.8,305.0 127.4,306.1 131.0,307.2 C134.7,308.4 138.4,309.5 142.1,310.5 C145.9,311.6 149.7,312.6 153.6,313.6 C157.5,314.6 161.4,315.6 165.3,316.6 C169.3,317.5 173.3,318.4 177.3,319.3 C181.3,320.2 185.3,321.0 189.4,321.8 C193.4,322.6 197.5,323.4 201.6,324.1 C205.7,324.8 209.8,325.5 213.8,326.1 C217.9,326.7 222.0,327.3 226.1,327.9 C230.1,328.4 234.2,329.0 238.2,329.4 C242.2,329.9 246.3,330.3 250.2,330.7 C254.2,331.1 258.2,331.4 262.1,331.7 C266.0,332.0 269.8,332.2 273.6,332.4 C277.5,332.6 281.2,332.7 284.9,332.8 C288.6,332.9 292.3,333.0 295.8,333.0 C299.4,333.0 302.9,332.9 306.3,332.8 C309.7,332.7 313.1,332.6 316.4,332.4 C319.6,332.2 322.8,332.0 325.9,331.7 C329.0,331.4 332.0,331.1 334.8,330.7 C337.7,330.3 340.5,329.9 343.2,329.4 C345.9,329.0 348.5,328.5 350.9,327.9 C353.4,327.3 355.7,326.7 358.0,326.1 C360.2,325.5 362.3,324.8 364.3,324.0 C366.3,323.3 368.2,322.5 369.9,321.7 C371.7,320.9 373.3,320.0 374.8,319.1 C376.2,318.2 378.1,316.8 378.8,316.3" fill="none" stroke="#0c2a60" stroke-opacity="0.42" stroke-width="2.2" transform="translate(0,1.2)" filter="url(#b1)" clip-path="url(#cb)"/>
<path d="M37.2,239.9 C37.2,240.2 37.2,241.1 37.1,241.9 C37.1,242.7 37.0,243.5 37.0,244.4 C37.0,245.4 37.1,246.6 37.3,247.7 C37.6,248.8 37.9,249.9 38.4,251.0 C38.9,252.2 39.5,253.3 40.3,254.5 C41.1,255.7 42.0,256.9 43.0,258.2 C44.1,259.4 45.2,260.7 46.5,261.9 C47.8,263.2 49.3,264.5 50.9,265.7 C52.4,267.0 54.2,268.3 56.0,269.6 C57.8,270.9 59.8,272.2 61.9,273.5 C64.0,274.8 66.2,276.1 68.5,277.4 C70.8,278.7 73.3,280.0 75.8,281.3 C78.4,282.6 81.1,283.9 83.8,285.2 C86.6,286.5 89.5,287.7 92.4,289.0 C95.4,290.3 98.5,291.5 101.6,292.7 C104.8,293.9 108.0,295.2 111.4,296.3 C114.7,297.5 118.1,298.7 121.6,299.9 C125.1,301.0 128.6,302.1 132.2,303.2 C135.9,304.3 139.6,305.4 143.3,306.5 C147.0,307.5 150.8,308.5 154.7,309.5 C158.5,310.5 162.4,311.5 166.3,312.4 C170.2,313.3 174.2,314.2 178.2,315.1 C182.2,316.0 186.2,316.8 190.2,317.6 C194.2,318.4 198.3,319.1 202.3,319.8 C206.4,320.5 210.4,321.2 214.5,321.9 C218.5,322.5 222.6,323.1 226.6,323.6 C230.7,324.2 234.7,324.7 238.7,325.2 C242.7,325.6 246.7,326.1 250.6,326.5 C254.6,326.8 258.5,327.2 262.4,327.5 C266.2,327.8 270.1,328.0 273.9,328.2 C277.6,328.4 281.4,328.6 285.0,328.7 C288.7,328.8 292.3,328.9 295.8,328.9 C299.4,328.9 302.8,328.9 306.2,328.8 C309.6,328.7 312.9,328.6 316.1,328.4 C319.4,328.3 322.5,328.1 325.5,327.8 C328.6,327.6 331.5,327.3 334.4,326.9 C337.2,326.6 340.0,326.2 342.6,325.8 C345.2,325.3 347.7,324.9 350.1,324.4 C352.5,323.8 354.8,323.3 357.0,322.7 C359.2,322.1 361.2,321.5 363.2,320.8 C365.1,320.1 366.9,319.4 368.5,318.7 C370.2,318.0 371.7,317.2 373.1,316.4 C374.5,315.6 375.8,314.7 376.9,313.9 C378.0,313.0 379.0,312.1 379.9,311.2 C380.7,310.3 381.5,309.4 382.1,308.5 C382.7,307.5 383.1,306.4 383.5,305.5 C383.8,304.6 384.0,303.8 384.2,303.1 C384.5,302.4 384.8,301.5 384.9,301.2 L386.4,301.5 L386.3,303.5 L385.9,306.4 L384.5,309.9 L382.1,313.2 L378.8,316.3 L374.8,319.1 L369.9,321.7 L364.3,324.0 L358.0,326.1 L350.9,327.9 L343.2,329.4 L334.8,330.7 L325.9,331.7 L316.4,332.4 L306.3,332.8 L295.8,333.0 L284.9,332.8 L273.6,332.4 L262.1,331.7 L250.2,330.7 L238.2,329.4 L226.1,327.9 L213.8,326.1 L201.6,324.1 L189.4,321.8 L177.3,319.3 L165.3,316.6 L153.6,313.6 L142.1,310.5 L131.0,307.2 L120.3,303.8 L110.0,300.2 L100.2,296.5 L90.9,292.6 L82.2,288.7 L74.1,284.7 L66.7,280.7 L59.9,276.6 L53.9,272.5 L48.7,268.4 L44.2,264.3 L40.5,260.2 L37.7,256.2 L35.7,252.2 L34.6,248.2 L34.4,244.4 L35.0,241.6 L35.7,239.6Z" fill="url(#ribg1)"/>
<path d="M37.2,239.9 C37.2,240.2 37.2,241.1 37.1,241.9 C37.1,242.7 37.0,243.5 37.0,244.4 C37.0,245.4 37.1,246.6 37.3,247.7 C37.6,248.8 37.9,249.9 38.4,251.0 C38.9,252.2 39.5,253.3 40.3,254.5 C41.1,255.7 42.0,256.9 43.0,258.2 C44.1,259.4 45.2,260.7 46.5,261.9 C47.8,263.2 49.3,264.5 50.9,265.7 C52.4,267.0 54.2,268.3 56.0,269.6 C57.8,270.9 59.8,272.2 61.9,273.5 C64.0,274.8 66.2,276.1 68.5,277.4 C70.8,278.7 73.3,280.0 75.8,281.3 C78.4,282.6 81.1,283.9 83.8,285.2 C86.6,286.5 89.5,287.7 92.4,289.0 C95.4,290.3 98.5,291.5 101.6,292.7 C104.8,293.9 108.0,295.2 111.4,296.3 C114.7,297.5 118.1,298.7 121.6,299.9 C125.1,301.0 128.6,302.1 132.2,303.2 C135.9,304.3 139.6,305.4 143.3,306.5 C147.0,307.5 150.8,308.5 154.7,309.5 C158.5,310.5 162.4,311.5 166.3,312.4 C170.2,313.3 174.2,314.2 178.2,315.1 C182.2,316.0 186.2,316.8 190.2,317.6 C194.2,318.4 198.3,319.1 202.3,319.8 C206.4,320.5 210.4,321.2 214.5,321.9 C218.5,322.5 222.6,323.1 226.6,323.6 C230.7,324.2 234.7,324.7 238.7,325.2 C242.7,325.6 246.7,326.1 250.6,326.5 C254.6,326.8 258.5,327.2 262.4,327.5 C266.2,327.8 270.1,328.0 273.9,328.2 C277.6,328.4 281.4,328.6 285.0,328.7 C288.7,328.8 292.3,328.9 295.8,328.9 C299.4,328.9 302.8,328.9 306.2,328.8 C309.6,328.7 312.9,328.6 316.1,328.4 C319.4,328.3 322.5,328.1 325.5,327.8 C328.6,327.6 331.5,327.3 334.4,326.9 C337.2,326.6 340.0,326.2 342.6,325.8 C345.2,325.3 347.7,324.9 350.1,324.4 C352.5,323.8 354.8,323.3 357.0,322.7 C359.2,322.1 361.2,321.5 363.2,320.8 C365.1,320.1 366.9,319.4 368.5,318.7 C370.2,318.0 371.7,317.2 373.1,316.4 C374.5,315.6 375.8,314.7 376.9,313.9 C378.0,313.0 379.0,312.1 379.9,311.2 C380.7,310.3 381.5,309.4 382.1,308.5 C382.7,307.5 383.1,306.4 383.5,305.5 C383.8,304.6 384.0,303.8 384.2,303.1 C384.5,302.4 384.8,301.5 384.9,301.2 L386.4,301.5 L386.3,303.5 L385.9,306.4 L384.5,309.9 L382.1,313.2 L378.8,316.3 L374.8,319.1 L369.9,321.7 L364.3,324.0 L358.0,326.1 L350.9,327.9 L343.2,329.4 L334.8,330.7 L325.9,331.7 L316.4,332.4 L306.3,332.8 L295.8,333.0 L284.9,332.8 L273.6,332.4 L262.1,331.7 L250.2,330.7 L238.2,329.4 L226.1,327.9 L213.8,326.1 L201.6,324.1 L189.4,321.8 L177.3,319.3 L165.3,316.6 L153.6,313.6 L142.1,310.5 L131.0,307.2 L120.3,303.8 L110.0,300.2 L100.2,296.5 L90.9,292.6 L82.2,288.7 L74.1,284.7 L66.7,280.7 L59.9,276.6 L53.9,272.5 L48.7,268.4 L44.2,264.3 L40.5,260.2 L37.7,256.2 L35.7,252.2 L34.6,248.2 L34.4,244.4 L35.0,241.6 L35.7,239.6Z" fill="url(#ribbr)"/>
<path d="M37.7,256.2 C38.2,256.8 39.5,258.9 40.5,260.2 C41.6,261.6 42.9,262.9 44.2,264.3 C45.6,265.6 47.1,267.0 48.7,268.4 C50.3,269.7 52.1,271.1 53.9,272.5 C55.8,273.9 57.8,275.2 59.9,276.6 C62.1,278.0 64.3,279.3 66.7,280.7 C69.0,282.0 71.5,283.4 74.1,284.7 C76.7,286.1 79.4,287.4 82.2,288.7 C85.0,290.0 87.9,291.3 90.9,292.6 C93.9,293.9 97.0,295.2 100.2,296.5 C103.4,297.7 106.6,299.0 110.0,300.2 C113.3,301.4 116.8,302.6 120.3,303.8 C123.8,305.0 127.4,306.1 131.0,307.2 C134.7,308.4 138.4,309.5 142.1,310.5 C145.9,311.6 149.7,312.6 153.6,313.6 C157.5,314.6 161.4,315.6 165.3,316.6 C169.3,317.5 173.3,318.4 177.3,319.3 C181.3,320.2 185.3,321.0 189.4,321.8 C193.4,322.6 197.5,323.4 201.6,324.1 C205.7,324.8 209.8,325.5 213.8,326.1 C217.9,326.7 222.0,327.3 226.1,327.9 C230.1,328.4 234.2,329.0 238.2,329.4 C242.2,329.9 246.3,330.3 250.2,330.7 C254.2,331.1 258.2,331.4 262.1,331.7 C266.0,332.0 269.8,332.2 273.6,332.4 C277.5,332.6 281.2,332.7 284.9,332.8 C288.6,332.9 292.3,333.0 295.8,333.0 C299.4,333.0 302.9,332.9 306.3,332.8 C309.7,332.7 313.1,332.6 316.4,332.4 C319.6,332.2 322.8,332.0 325.9,331.7 C329.0,331.4 332.0,331.1 334.8,330.7 C337.7,330.3 340.5,329.9 343.2,329.4 C345.9,329.0 348.5,328.5 350.9,327.9 C353.4,327.3 355.7,326.7 358.0,326.1 C360.2,325.5 362.3,324.8 364.3,324.0 C366.3,323.3 368.2,322.5 369.9,321.7 C371.7,320.9 373.3,320.0 374.8,319.1 C376.2,318.2 378.1,316.8 378.8,316.3" fill="none" stroke="#06204c" stroke-opacity="0.22" stroke-width="1.2" transform="translate(0,-0.6)"/>
<path d="M39.0,255.3 C39.5,256.0 40.7,257.9 41.8,259.2 C42.8,260.5 44.0,261.8 45.4,263.1 C46.7,264.4 48.2,265.7 49.8,267.1 C51.4,268.4 53.1,269.7 55.0,271.1 C56.8,272.4 58.8,273.7 60.9,275.1 C63.0,276.4 65.2,277.7 67.6,279.1 C69.9,280.4 72.4,281.7 75.0,283.0 C77.5,284.3 80.2,285.7 83.0,287.0 C85.8,288.3 88.7,289.5 91.7,290.8 C94.6,292.1 97.7,293.4 100.9,294.6 C104.1,295.8 107.3,297.1 110.7,298.3 C114.0,299.5 117.4,300.7 120.9,301.8 C124.4,303.0 128.0,304.1 131.6,305.2 C135.3,306.3 139.0,307.4 142.7,308.5 C146.5,309.6 150.3,310.6 154.1,311.6 C158.0,312.6 161.9,313.6 165.8,314.5 C169.8,315.4 173.7,316.3 177.7,317.2 C181.7,318.1 185.8,318.9 189.8,319.7 C193.8,320.5 197.9,321.2 202.0,322.0 C206.0,322.7 210.1,323.3 214.2,324.0 C218.2,324.6 222.3,325.2 226.4,325.8 C230.4,326.3 234.5,326.8 238.5,327.3 C242.5,327.8 246.5,328.2 250.4,328.6 C254.4,328.9 258.3,329.3 262.2,329.6 C266.1,329.9 270.0,330.1 273.8,330.3 C277.5,330.5 281.3,330.6 285.0,330.7 C288.7,330.8 292.3,330.9 295.8,330.9 C299.4,330.9 302.9,330.9 306.3,330.8 C309.7,330.7 313.0,330.6 316.2,330.4 C319.5,330.2 322.6,330.0 325.7,329.8 C328.8,329.5 331.7,329.2 334.6,328.8 C337.5,328.5 340.2,328.0 342.9,327.6 C345.5,327.2 348.1,326.7 350.5,326.1 C353.0,325.6 355.3,325.0 357.5,324.4 C359.7,323.8 361.8,323.1 363.7,322.4 C365.7,321.7 367.5,321.0 369.2,320.2 C370.9,319.4 372.5,318.6 373.9,317.8 C375.4,316.9 377.2,315.5 377.9,315.1" fill="none" stroke="#fff" stroke-opacity="0.16" stroke-width="1.6" transform="translate(0,-0.7)" filter="url(#b1)"/>
<path d="M25.2,327.1 C25.7,327.7 26.9,329.8 28.0,331.1 C29.1,332.5 30.3,333.8 31.7,335.2 C33.1,336.6 34.6,337.9 36.2,339.3 C37.8,340.7 39.6,342.0 41.4,343.4 C43.3,344.8 45.3,346.1 47.4,347.5 C49.6,348.9 51.8,350.2 54.2,351.6 C56.5,352.9 59.0,354.3 61.6,355.6 C64.2,357.0 66.9,358.3 69.7,359.6 C72.5,360.9 75.4,362.2 78.4,363.5 C81.4,364.8 84.5,366.1 87.7,367.4 C90.8,368.6 94.1,369.9 97.5,371.1 C100.8,372.3 104.3,373.5 107.8,374.7 C111.3,375.9 114.9,377.0 118.5,378.1 C122.2,379.3 125.9,380.4 129.6,381.4 C133.4,382.5 137.2,383.5 141.1,384.5 C145.0,385.6 148.9,386.5 152.8,387.5 C156.8,388.4 160.8,389.3 164.8,390.2 C168.8,391.1 172.8,391.9 176.9,392.7 C180.9,393.5 185.0,394.3 189.1,395.0 C193.2,395.7 197.2,396.4 201.3,397.0 C205.4,397.6 209.5,398.2 213.6,398.8 C217.6,399.3 221.7,399.9 225.7,400.3 C229.7,400.8 233.8,401.2 237.7,401.6 C241.7,402.0 245.7,402.3 249.6,402.6 C253.5,402.9 257.3,403.1 261.1,403.3 C265.0,403.5 268.7,403.6 272.4,403.7 C276.1,403.8 279.8,403.9 283.3,403.9 C286.9,403.9 290.4,403.8 293.8,403.7 C297.2,403.6 300.6,403.5 303.9,403.3 C307.1,403.1 310.3,402.9 313.4,402.6 C316.5,402.3 319.4,402.0 322.3,401.6 C325.2,401.2 328.0,400.8 330.7,400.3 C333.4,399.9 336.0,399.4 338.4,398.8 C340.9,398.3 343.2,397.6 345.5,397.0 C347.7,396.4 349.8,395.7 351.8,394.9 C353.8,394.2 355.7,393.4 357.4,392.6 C359.2,391.8 360.8,390.9 362.3,390.0 C363.7,389.1 365.6,387.7 366.3,387.2" fill="none" stroke="#0c2a60" stroke-opacity="0.42" stroke-width="2.2" transform="translate(0,1.2)" filter="url(#b1)" clip-path="url(#cb)"/>
<path d="M24.7,310.8 C24.6,311.1 24.7,312.0 24.6,312.8 C24.6,313.6 24.5,314.4 24.5,315.4 C24.5,316.3 24.6,317.5 24.8,318.6 C25.1,319.7 25.4,320.8 25.9,321.9 C26.4,323.1 27.0,324.2 27.8,325.4 C28.6,326.6 29.5,327.8 30.5,329.1 C31.5,330.3 32.7,331.6 34.0,332.8 C35.3,334.1 36.8,335.4 38.4,336.6 C39.9,337.9 41.7,339.2 43.5,340.5 C45.3,341.8 47.3,343.1 49.4,344.4 C51.5,345.7 53.7,347.0 56.0,348.3 C58.3,349.6 60.8,351.0 63.3,352.2 C65.9,353.5 68.6,354.8 71.3,356.1 C74.1,357.4 77.0,358.6 79.9,359.9 C82.9,361.2 86.0,362.4 89.1,363.6 C92.3,364.9 95.5,366.1 98.9,367.3 C102.2,368.4 105.6,369.6 109.1,370.8 C112.6,371.9 116.1,373.0 119.7,374.1 C123.4,375.2 127.1,376.3 130.8,377.4 C134.5,378.4 138.3,379.4 142.2,380.4 C146.0,381.4 149.9,382.4 153.8,383.3 C157.7,384.2 161.7,385.1 165.7,386.0 C169.7,386.9 173.7,387.7 177.7,388.5 C181.7,389.3 185.8,390.0 189.8,390.7 C193.9,391.5 197.9,392.1 202.0,392.8 C206.0,393.4 210.1,394.0 214.1,394.6 C218.2,395.1 222.2,395.6 226.2,396.1 C230.2,396.6 234.2,397.0 238.1,397.4 C242.1,397.7 246.0,398.1 249.9,398.4 C253.7,398.7 257.6,398.9 261.4,399.1 C265.1,399.3 268.9,399.5 272.5,399.6 C276.2,399.7 279.8,399.8 283.3,399.8 C286.9,399.8 290.3,399.8 293.7,399.7 C297.1,399.6 300.4,399.5 303.6,399.3 C306.9,399.2 310.0,399.0 313.0,398.7 C316.1,398.5 319.0,398.2 321.9,397.8 C324.7,397.5 327.4,397.1 330.1,396.7 C332.7,396.2 335.2,395.8 337.6,395.3 C340.0,394.7 342.3,394.2 344.5,393.6 C346.7,393.0 348.7,392.4 350.7,391.7 C352.6,391.0 354.4,390.3 356.0,389.6 C357.7,388.9 359.2,388.1 360.6,387.3 C362.0,386.5 363.3,385.6 364.4,384.8 C365.5,383.9 366.5,383.1 367.4,382.1 C368.2,381.2 369.0,380.3 369.6,379.4 C370.2,378.4 370.6,377.3 371.0,376.4 C371.3,375.5 371.5,374.7 371.7,374.0 C372.0,373.3 372.3,372.4 372.4,372.1 L373.9,372.4 L373.8,374.4 L373.4,377.3 L372.0,380.8 L369.6,384.1 L366.3,387.2 L362.3,390.0 L357.4,392.6 L351.8,394.9 L345.5,397.0 L338.4,398.8 L330.7,400.3 L322.3,401.6 L313.4,402.6 L303.9,403.3 L293.8,403.7 L283.3,403.9 L272.4,403.7 L261.1,403.3 L249.6,402.6 L237.7,401.6 L225.7,400.3 L213.6,398.8 L201.3,397.0 L189.1,395.0 L176.9,392.7 L164.8,390.2 L152.8,387.5 L141.1,384.5 L129.6,381.4 L118.5,378.1 L107.8,374.7 L97.5,371.1 L87.7,367.4 L78.4,363.5 L69.7,359.6 L61.6,355.6 L54.2,351.6 L47.4,347.5 L41.4,343.4 L36.2,339.3 L31.7,335.2 L28.0,331.1 L25.2,327.1 L23.2,323.1 L22.1,319.1 L21.9,315.3 L22.5,312.5 L23.2,310.5Z" fill="url(#ribg2)"/>
<path d="M24.7,310.8 C24.6,311.1 24.7,312.0 24.6,312.8 C24.6,313.6 24.5,314.4 24.5,315.4 C24.5,316.3 24.6,317.5 24.8,318.6 C25.1,319.7 25.4,320.8 25.9,321.9 C26.4,323.1 27.0,324.2 27.8,325.4 C28.6,326.6 29.5,327.8 30.5,329.1 C31.5,330.3 32.7,331.6 34.0,332.8 C35.3,334.1 36.8,335.4 38.4,336.6 C39.9,337.9 41.7,339.2 43.5,340.5 C45.3,341.8 47.3,343.1 49.4,344.4 C51.5,345.7 53.7,347.0 56.0,348.3 C58.3,349.6 60.8,351.0 63.3,352.2 C65.9,353.5 68.6,354.8 71.3,356.1 C74.1,357.4 77.0,358.6 79.9,359.9 C82.9,361.2 86.0,362.4 89.1,363.6 C92.3,364.9 95.5,366.1 98.9,367.3 C102.2,368.4 105.6,369.6 109.1,370.8 C112.6,371.9 116.1,373.0 119.7,374.1 C123.4,375.2 127.1,376.3 130.8,377.4 C134.5,378.4 138.3,379.4 142.2,380.4 C146.0,381.4 149.9,382.4 153.8,383.3 C157.7,384.2 161.7,385.1 165.7,386.0 C169.7,386.9 173.7,387.7 177.7,388.5 C181.7,389.3 185.8,390.0 189.8,390.7 C193.9,391.5 197.9,392.1 202.0,392.8 C206.0,393.4 210.1,394.0 214.1,394.6 C218.2,395.1 222.2,395.6 226.2,396.1 C230.2,396.6 234.2,397.0 238.1,397.4 C242.1,397.7 246.0,398.1 249.9,398.4 C253.7,398.7 257.6,398.9 261.4,399.1 C265.1,399.3 268.9,399.5 272.5,399.6 C276.2,399.7 279.8,399.8 283.3,399.8 C286.9,399.8 290.3,399.8 293.7,399.7 C297.1,399.6 300.4,399.5 303.6,399.3 C306.9,399.2 310.0,399.0 313.0,398.7 C316.1,398.5 319.0,398.2 321.9,397.8 C324.7,397.5 327.4,397.1 330.1,396.7 C332.7,396.2 335.2,395.8 337.6,395.3 C340.0,394.7 342.3,394.2 344.5,393.6 C346.7,393.0 348.7,392.4 350.7,391.7 C352.6,391.0 354.4,390.3 356.0,389.6 C357.7,388.9 359.2,388.1 360.6,387.3 C362.0,386.5 363.3,385.6 364.4,384.8 C365.5,383.9 366.5,383.1 367.4,382.1 C368.2,381.2 369.0,380.3 369.6,379.4 C370.2,378.4 370.6,377.3 371.0,376.4 C371.3,375.5 371.5,374.7 371.7,374.0 C372.0,373.3 372.3,372.4 372.4,372.1 L373.9,372.4 L373.8,374.4 L373.4,377.3 L372.0,380.8 L369.6,384.1 L366.3,387.2 L362.3,390.0 L357.4,392.6 L351.8,394.9 L345.5,397.0 L338.4,398.8 L330.7,400.3 L322.3,401.6 L313.4,402.6 L303.9,403.3 L293.8,403.7 L283.3,403.9 L272.4,403.7 L261.1,403.3 L249.6,402.6 L237.7,401.6 L225.7,400.3 L213.6,398.8 L201.3,397.0 L189.1,395.0 L176.9,392.7 L164.8,390.2 L152.8,387.5 L141.1,384.5 L129.6,381.4 L118.5,378.1 L107.8,374.7 L97.5,371.1 L87.7,367.4 L78.4,363.5 L69.7,359.6 L61.6,355.6 L54.2,351.6 L47.4,347.5 L41.4,343.4 L36.2,339.3 L31.7,335.2 L28.0,331.1 L25.2,327.1 L23.2,323.1 L22.1,319.1 L21.9,315.3 L22.5,312.5 L23.2,310.5Z" fill="url(#ribbr)"/>
<path d="M25.2,327.1 C25.7,327.7 26.9,329.8 28.0,331.1 C29.1,332.5 30.3,333.8 31.7,335.2 C33.1,336.6 34.6,337.9 36.2,339.3 C37.8,340.7 39.6,342.0 41.4,343.4 C43.3,344.8 45.3,346.1 47.4,347.5 C49.6,348.9 51.8,350.2 54.2,351.6 C56.5,352.9 59.0,354.3 61.6,355.6 C64.2,357.0 66.9,358.3 69.7,359.6 C72.5,360.9 75.4,362.2 78.4,363.5 C81.4,364.8 84.5,366.1 87.7,367.4 C90.8,368.6 94.1,369.9 97.5,371.1 C100.8,372.3 104.3,373.5 107.8,374.7 C111.3,375.9 114.9,377.0 118.5,378.1 C122.2,379.3 125.9,380.4 129.6,381.4 C133.4,382.5 137.2,383.5 141.1,384.5 C145.0,385.6 148.9,386.5 152.8,387.5 C156.8,388.4 160.8,389.3 164.8,390.2 C168.8,391.1 172.8,391.9 176.9,392.7 C180.9,393.5 185.0,394.3 189.1,395.0 C193.2,395.7 197.2,396.4 201.3,397.0 C205.4,397.6 209.5,398.2 213.6,398.8 C217.6,399.3 221.7,399.9 225.7,400.3 C229.7,400.8 233.8,401.2 237.7,401.6 C241.7,402.0 245.7,402.3 249.6,402.6 C253.5,402.9 257.3,403.1 261.1,403.3 C265.0,403.5 268.7,403.6 272.4,403.7 C276.1,403.8 279.8,403.9 283.3,403.9 C286.9,403.9 290.4,403.8 293.8,403.7 C297.2,403.6 300.6,403.5 303.9,403.3 C307.1,403.1 310.3,402.9 313.4,402.6 C316.5,402.3 319.4,402.0 322.3,401.6 C325.2,401.2 328.0,400.8 330.7,400.3 C333.4,399.9 336.0,399.4 338.4,398.8 C340.9,398.3 343.2,397.6 345.5,397.0 C347.7,396.4 349.8,395.7 351.8,394.9 C353.8,394.2 355.7,393.4 357.4,392.6 C359.2,391.8 360.8,390.9 362.3,390.0 C363.7,389.1 365.6,387.7 366.3,387.2" fill="none" stroke="#06204c" stroke-opacity="0.22" stroke-width="1.2" transform="translate(0,-0.6)"/>
<path d="M26.5,326.3 C27.0,326.9 28.2,328.8 29.3,330.1 C30.3,331.4 31.5,332.7 32.9,334.0 C34.2,335.3 35.7,336.6 37.3,338.0 C38.9,339.3 40.6,340.6 42.5,342.0 C44.3,343.3 46.3,344.6 48.4,346.0 C50.5,347.3 52.7,348.6 55.1,350.0 C57.4,351.3 59.9,352.6 62.5,353.9 C65.0,355.3 67.7,356.6 70.5,357.9 C73.3,359.2 76.2,360.4 79.2,361.7 C82.1,363.0 85.2,364.3 88.4,365.5 C91.6,366.7 94.8,368.0 98.2,369.2 C101.5,370.4 104.9,371.6 108.4,372.7 C111.9,373.9 115.5,375.0 119.1,376.1 C122.8,377.3 126.5,378.3 130.2,379.4 C134.0,380.5 137.8,381.5 141.6,382.5 C145.5,383.5 149.4,384.5 153.3,385.4 C157.2,386.3 161.2,387.2 165.2,388.1 C169.2,389.0 173.2,389.8 177.3,390.6 C181.3,391.4 185.4,392.1 189.5,392.9 C193.5,393.6 197.6,394.3 201.7,394.9 C205.7,395.5 209.8,396.1 213.9,396.7 C217.9,397.2 221.9,397.7 226.0,398.2 C230.0,398.7 234.0,399.1 237.9,399.5 C241.9,399.9 245.8,400.2 249.7,400.5 C253.6,400.8 257.5,401.0 261.3,401.2 C265.0,401.4 268.8,401.5 272.5,401.6 C276.2,401.8 279.8,401.8 283.3,401.8 C286.9,401.8 290.4,401.8 293.8,401.7 C297.2,401.6 300.5,401.5 303.7,401.3 C307.0,401.1 310.1,400.9 313.2,400.7 C316.3,400.4 319.2,400.1 322.1,399.7 C325.0,399.4 327.7,399.0 330.4,398.5 C333.0,398.1 335.6,397.6 338.0,397.0 C340.5,396.5 342.8,395.9 345.0,395.3 C347.2,394.7 349.3,394.0 351.2,393.3 C353.2,392.6 355.0,391.9 356.7,391.1 C358.4,390.3 360.0,389.5 361.4,388.7 C362.9,387.8 364.7,386.4 365.4,386.0" fill="none" stroke="#fff" stroke-opacity="0.16" stroke-width="1.6" transform="translate(0,-0.7)" filter="url(#b1)"/>
<path d="M247.4,328.3 C248.8,328.4 253.3,328.8 256.2,329.1 C259.2,329.3 262.1,329.6 265.0,329.7 C267.9,329.9 271.2,330.1 273.6,330.3 C276.0,330.4 278.3,330.5 279.2,330.5" fill="none" stroke="#fff" stroke-opacity="0.6" stroke-width="1.3" transform="translate(0,-0.6)" filter="url(#b1)"/>
<path d="M234.9,399.2 C236.3,399.3 240.8,399.7 243.7,400.0 C246.7,400.2 249.6,400.5 252.5,400.7 C255.4,400.9 258.7,401.0 261.1,401.2 C263.5,401.3 265.8,401.4 266.7,401.4" fill="none" stroke="#fff" stroke-opacity="0.6" stroke-width="1.3" transform="translate(0,-0.6)" filter="url(#b1)"/>
<path d="M47.5,175 L52.5,161.7 L55,150 L67.5,141.7 L70.8,124.2 L120,124.7 L138.7,119.2 L145.3,80 L183,81.3 L216.7,108.3 L246.7,111.7 L270,118 L290,131.7 L382.5,133.3 L397.5,145 L396,156.7 L391,194 L396.7,205 L398.3,213 L397,228 L398,234  L397.5,234.0 L396.0,237.0 L390.0,244.0 L380.0,250.0 L363.0,255.0 L330.0,258.2 L310.0,260.0 L290.5,260.4 L255.0,258.3 L230.0,255.6 L205.0,251.2 L186.7,246.7 L156.7,239.2 L123.3,229.2 L101.7,221.7 L73.3,207.5 L56.7,193.3 L48.5,177.0 L47.5,173.5Z" fill="url(#lidrim)"/>
<path d="M79.2,184.2 C82.7,182.0 92.4,175.0 100.0,171.0 C107.6,167.0 116.7,163.2 125.0,160.0 C133.3,156.8 141.1,154.5 150.0,152.0 C158.9,149.5 173.8,146.2 178.5,145.0 L205,141.7 L246.7,150 L283.3,157.5 L307.5,144.2 C311.8,146.3 323.1,151.6 333.0,156.7 C342.9,161.8 356.9,169.2 366.7,175.0 C376.5,180.8 387.5,188.9 391.7,191.7 L396.7,205 L398.3,213 C398.2,213.8 398.0,216.2 397.6,217.5 C397.2,218.8 397.1,219.3 395.8,220.5 C394.5,221.7 393.0,222.8 390.0,224.5 C387.0,226.2 383.0,228.6 378.0,230.5 C373.0,232.4 366.3,234.8 360.0,236.2 C353.7,237.6 347.4,238.4 340.0,239.0 C332.6,239.6 326.4,239.9 315.8,239.5 C305.2,239.1 287.7,237.8 276.7,236.5 C265.7,235.2 259.4,233.3 250.0,231.5 C240.6,229.7 232.0,228.1 220.0,225.5 C208.0,222.9 190.2,218.9 178.0,216.0 C165.8,213.1 157.5,211.2 146.7,208.3 C135.9,205.4 124.5,202.3 113.3,198.3 C102.0,194.3 84.9,186.5 79.2,184.2Z" fill="url(#domeg)"/>
<clipPath id="cband"><path d="M60.0,171.7 C63.2,173.8 70.3,179.8 79.2,184.2 C88.1,188.6 102.0,194.3 113.3,198.3 C124.5,202.3 135.9,205.4 146.7,208.3 C157.5,211.2 165.8,213.1 178.0,216.0 C190.2,218.9 208.0,222.9 220.0,225.5 C232.0,228.1 240.6,229.7 250.0,231.5 C259.4,233.3 265.7,235.2 276.7,236.5 C287.7,237.8 305.2,239.1 315.8,239.5 C326.4,239.9 332.6,239.6 340.0,239.0 C347.4,238.4 353.7,237.6 360.0,236.2 C366.3,234.8 373.0,232.4 378.0,230.5 C383.0,228.6 387.0,226.2 390.0,224.5 C393.0,222.8 394.8,221.2 395.8,220.5 L398.0,234.0 L397.5,234.0 L396.0,237.0 L390.0,244.0 L380.0,250.0 L363.0,255.0 L330.0,258.2 L310.0,260.0 L290.5,260.4 L255.0,258.3 L230.0,255.6 L205.0,251.2 L186.7,246.7 L156.7,239.2 L123.3,229.2 L101.7,221.7 L73.3,207.5 L56.7,193.3 L48.5,177.0 L47.5,173.5 L52.5,161.7 Z"/></clipPath>
<clipPath id="clid"><path d="M47.5,175 L52.5,161.7 L55,150 L67.5,141.7 L70.8,124.2 L120,124.7 L138.7,119.2 L145.3,80 L183,81.3 L216.7,108.3 L246.7,111.7 L270,118 L290,131.7 L382.5,133.3 L397.5,145 L396,156.7 L391,194 L396.7,205 L398.3,213 L397,228 L398,234  L397.5,234.0 L396.0,237.0 L390.0,244.0 L380.0,250.0 L363.0,255.0 L330.0,258.2 L310.0,260.0 L290.5,260.4 L255.0,258.3 L230.0,255.6 L205.0,251.2 L186.7,246.7 L156.7,239.2 L123.3,229.2 L101.7,221.7 L73.3,207.5 L56.7,193.3 L48.5,177.0 L47.5,173.5Z"/></clipPath>
<g clip-path="url(#clid)"><path d="M60.0,171.7 C63.2,173.8 70.3,179.8 79.2,184.2 C88.1,188.6 102.0,194.3 113.3,198.3 C124.5,202.3 135.9,205.4 146.7,208.3 C157.5,211.2 165.8,213.1 178.0,216.0 C190.2,218.9 208.0,222.9 220.0,225.5 C232.0,228.1 245.0,230.5 250.0,231.5" fill="none" stroke="url(#softg)" stroke-width="9" transform="translate(1,3)" filter="url(#b3)"/></g>
<g clip-path="url(#cband)" opacity="0.55"><use href="#cont" filter="url(#dk)"/></g>
<path d="M67.5,141.7 L55,150 L52.5,161.7 L60,171.7 Z" fill="#3570d0"/>
<path d="M47.5,173.5 C47.7,174.1 47.0,173.7 48.5,177.0 C50.0,180.3 52.6,188.2 56.7,193.3 C60.8,198.4 65.8,202.8 73.3,207.5 C80.8,212.2 93.4,218.1 101.7,221.7 C110.0,225.3 114.1,226.3 123.3,229.2 C132.5,232.1 146.1,236.3 156.7,239.2 C167.3,242.1 178.6,244.7 186.7,246.7 C194.8,248.7 197.8,249.7 205.0,251.2 C212.2,252.7 221.7,254.4 230.0,255.6 C238.3,256.8 244.9,257.5 255.0,258.3 C265.1,259.1 281.3,260.1 290.5,260.4 C299.7,260.7 303.4,260.4 310.0,260.0 C316.6,259.6 321.2,259.0 330.0,258.2 C338.8,257.4 354.7,256.4 363.0,255.0 C371.3,253.6 375.5,251.8 380.0,250.0 C384.5,248.2 387.3,246.2 390.0,244.0 C392.7,241.8 394.8,238.7 396.0,237.0 C397.2,235.3 397.2,234.5 397.5,234.0" fill="none" stroke="#0c2a60" stroke-opacity="0.45" stroke-width="1.6" transform="translate(0,2.6)" filter="url(#b1)" clip-path="url(#cb)"/>
<path d="M47.5,173.5 C47.7,174.1 47.0,173.7 48.5,177.0 C50.0,180.3 52.6,188.2 56.7,193.3 C60.8,198.4 65.8,202.8 73.3,207.5 C80.8,212.2 93.4,218.1 101.7,221.7 C110.0,225.3 114.1,226.3 123.3,229.2 C132.5,232.1 146.1,236.3 156.7,239.2 C167.3,242.1 178.6,244.7 186.7,246.7 C194.8,248.7 197.8,249.7 205.0,251.2 C212.2,252.7 221.7,254.4 230.0,255.6 C238.3,256.8 244.9,257.5 255.0,258.3 C265.1,259.1 281.3,260.1 290.5,260.4 C299.7,260.7 303.4,260.4 310.0,260.0 C316.6,259.6 321.2,259.0 330.0,258.2 C338.8,257.4 354.7,256.4 363.0,255.0 C371.3,253.6 375.5,251.8 380.0,250.0 C384.5,248.2 387.3,246.2 390.0,244.0 C392.7,241.8 394.8,238.7 396.0,237.0 C397.2,235.3 397.2,234.5 397.5,234.0" fill="none" stroke="#2a88b8" stroke-width="1.5" filter="url(#b1)"/>
<path d="M47.5,173.5 C47.7,174.1 47.0,173.7 48.5,177.0 C50.0,180.3 52.6,188.2 56.7,193.3 C60.8,198.4 65.8,202.8 73.3,207.5 C80.8,212.2 93.4,218.1 101.7,221.7 C110.0,225.3 114.1,226.3 123.3,229.2 C132.5,232.1 146.1,236.3 156.7,239.2 C167.3,242.1 178.6,244.7 186.7,246.7 C194.8,248.7 197.8,249.7 205.0,251.2 C212.2,252.7 221.7,254.4 230.0,255.6 C238.3,256.8 244.9,257.5 255.0,258.3 C265.1,259.1 281.3,260.1 290.5,260.4 C299.7,260.7 303.4,260.4 310.0,260.0 C316.6,259.6 321.2,259.0 330.0,258.2 C338.8,257.4 354.7,256.4 363.0,255.0 C371.3,253.6 375.5,251.8 380.0,250.0 C384.5,248.2 387.3,246.2 390.0,244.0 C392.7,241.8 394.8,238.7 396.0,237.0 C397.2,235.3 397.2,234.5 397.5,234.0" fill="none" stroke="url(#lipg)" stroke-width="4"/>
<path d="M238.0,256.2 C240.8,256.5 248.8,257.3 255.0,257.8 C261.2,258.3 268.8,258.9 275.0,259.2 C281.2,259.5 289.2,259.7 292.0,259.8" fill="none" stroke="#c8ecff" stroke-width="2" filter="url(#b1)" opacity="0.5"/>
<path d="M232.0,232.2 C235.0,232.6 244.3,233.8 250.0,234.6 C255.7,235.4 261.7,236.4 266.0,237.0 C270.3,237.6 274.3,237.8 276.0,238.0" fill="none" stroke="#b8e2ff" stroke-width="2" filter="url(#b1)" opacity="0.42"/>
<path d="M145.3,80 L183,81.3 L216.7,108.3 L185,110.8 Z" fill="#3d89f3"/>
<path d="M144.9,82 L138.7,119.2 L180,116.7 L185,110.8 Z" fill="#1f4784"/>
<path d="M70.8,124.2 L120,124.7 L138.7,119.8 L180,116.7 L180,126 L178.5,140.5 L86.5,138 Z" fill="#3d89f3"/>
<path d="M86.5,138 L178.5,140.5 L178.5,145 C173.8,146.2 158.9,149.5 150.0,152.0 C141.1,154.5 133.3,156.8 125.0,160.0 C116.7,163.2 107.6,167.0 100.0,171.0 C92.4,175.0 82.7,182.0 79.2,184.2 Z" fill="#3673d6"/>
<path d="M70.8,124.2 L86.7,137.5 L79.2,184.2 L60,171.7 L64.2,163.3 L67.5,141.7 Z" fill="#1f4a8c"/>
<path d="M86.5,138.4 L178.5,140.5" stroke="#7cc4ff" stroke-width="1.1" filter="url(#b1)"/>
<path d="M79.2,184.2 C82.7,182.0 92.4,175.0 100.0,171.0 C107.6,167.0 116.7,163.2 125.0,160.0 C133.3,156.8 141.1,154.5 150.0,152.0 C158.9,149.5 173.8,146.2 178.5,145.0" fill="none" stroke="#6ab6ff" stroke-width="1" filter="url(#b1)"/>
<path d="M290,131.7 L382.5,133.3 L397.5,145 L396.7,147.5 L307.5,144.2 L283.3,157.5 L278,150 Z" fill="#3d89f3"/>
<path d="M307.5,144.2 L396.7,147.5 L396,156.7 L391.7,191.7 C387.5,188.9 376.5,180.8 366.7,175.0 C356.9,169.2 342.9,161.8 333.0,156.7 C323.1,151.6 311.8,146.3 307.5,144.2Z" fill="#3673d6"/>
<path d="M307.5,144.4 L396.7,147.5" stroke="#7cc4ff" stroke-width="1.1" filter="url(#b1)"/>
<path d="M242.5,158.3 L281.7,156.7 L322,189.2 L285.8,190 Z" fill="#3d89f3"/>
<path d="M285.8,190 L322,189.2 L315.8,240.5 L276.7,236.7 Z" fill="#3673d6"/>
<path d="M242.5,158.3 L285.8,190 L276.7,236.7 C275.3,232.8 271.6,221.6 268.3,213.3 C265.0,205.0 261.0,195.9 256.7,186.7 C252.4,177.5 244.9,163.0 242.5,158.3Z" fill="#1f4784"/>
<path d="M286.5,190.3 L321.5,189.6" stroke="#5aaeff" stroke-width="1" filter="url(#b1)"/>
<path d="M179,117 L179,127 L190,134 L205,141.7 L225,147 L246.7,150.5 L283.5,157.8 L290,141 L284,150 L250,154 L215,149 L178.5,146 Z" fill="#3d89f3"/>
<path d="M180,142.5 C200,147 225,152 246,160" stroke="#1f4784" stroke-width="4" fill="none" filter="url(#b2)" opacity="0.85"/>
<path d="M291.1,134.4 C291.0,134.7 291.1,135.9 290.8,136.6 C290.5,137.3 290.1,138.0 289.5,138.6 C288.9,139.3 288.1,139.9 287.2,140.5 C286.3,141.1 285.2,141.7 283.9,142.2 C282.7,142.7 281.3,143.1 279.7,143.6 C278.2,144.0 276.5,144.3 274.7,144.7 C273.0,145.0 271.0,145.3 269.0,145.5 C267.0,145.7 264.9,145.9 262.6,146.0 C260.4,146.1 258.1,146.1 255.8,146.1 C253.4,146.1 251.0,146.1 248.5,146.0 C246.1,145.9 243.6,145.7 241.0,145.5 C238.5,145.3 236.0,145.0 233.5,144.7 C230.9,144.4 228.4,144.0 225.9,143.6 C223.4,143.1 220.9,142.7 218.5,142.2 C216.1,141.7 213.8,141.1 211.5,140.5 C209.2,139.9 207.0,139.3 204.9,138.7 C202.8,138.0 200.7,137.3 198.8,136.6 C196.9,135.9 195.1,135.2 193.5,134.4 C191.8,133.6 190.3,132.9 188.9,132.1 C187.5,131.3 186.3,130.5 185.2,129.7 C184.1,128.9 183.2,128.1 182.4,127.3 C181.7,126.5 181.1,125.7 180.7,124.9 C180.3,124.1 180.0,123.3 179.9,122.6 C179.9,121.8 180.2,120.7 180.2,120.4 L180.2,127.7 L179.9,129.9 L180.7,132.2 L182.4,134.6 L185.2,137.0 L188.9,139.4 L193.5,141.7 L198.8,143.9 L204.9,146.0 L211.5,147.8 L218.5,149.5 L225.9,150.9 L233.5,152.0 L241.0,152.8 L248.5,153.3 L255.8,153.4 L262.6,153.3 L269.0,152.8 L274.7,152.0 L279.7,150.9 L283.9,149.5 L287.2,147.8 L289.5,145.9 L290.8,143.9 L291.1,141.7Z" fill="url(#hubwall)"/>
<path d="M291.1,135.5 C290.9,136.5 290.5,137.4 289.9,138.2 C289.2,139.1 288.2,139.9 287.0,140.6 C285.8,141.4 284.3,142.1 282.6,142.7 C280.9,143.3 278.9,143.8 276.7,144.3 C274.6,144.7 272.2,145.1 269.6,145.4 C267.1,145.7 264.4,145.9 261.5,146.0 C258.7,146.1 255.6,146.2 252.6,146.1 C249.5,146.0 246.3,145.9 243.1,145.6 C239.9,145.4 236.7,145.1 233.5,144.7 C230.2,144.3 227.0,143.8 223.8,143.2 C220.7,142.6 217.6,142.0 214.6,141.3 C211.6,140.6 208.7,139.8 206.0,139.0 C203.2,138.2 200.6,137.3 198.2,136.4 C195.8,135.5 193.6,134.5 191.6,133.5 C189.7,132.5 187.9,131.5 186.4,130.5 C184.9,129.5 183.6,128.5 182.6,127.4 C181.6,126.4 180.9,125.4 180.4,124.4 C180.0,123.4 179.8,122.4 179.9,121.5 C180.1,120.5 180.5,119.6 181.1,118.8 C181.8,117.9 182.8,117.1 184.0,116.4 C185.2,115.6 186.7,114.9 188.4,114.3 C190.1,113.7 192.1,113.2 194.3,112.7 C196.4,112.3 198.8,111.9 201.4,111.6 C203.9,111.3 206.6,111.1 209.5,111.0 C212.3,110.9 215.4,110.8 218.4,110.9 C221.5,111.0 224.7,111.1 227.9,111.4 C231.1,111.6 234.3,111.9 237.5,112.3 C240.8,112.7 244.0,113.2 247.2,113.8 C250.3,114.4 253.4,115.0 256.4,115.7 C259.4,116.4 262.3,117.2 265.0,118.0 C267.8,118.8 270.4,119.7 272.8,120.6 C275.2,121.5 277.4,122.5 279.4,123.5 C281.3,124.5 283.1,125.5 284.6,126.5 C286.1,127.5 287.4,128.5 288.4,129.6 C289.4,130.6 290.1,131.6 290.6,132.6 C291.0,133.6 291.2,134.6 291.1,135.5Z" fill="#3b7fe6"/>
<path d="M285.1,135.0 C285.0,135.7 284.7,136.4 284.1,137.1 C283.5,137.7 282.7,138.3 281.6,138.9 C280.5,139.5 279.2,140.0 277.7,140.4 C276.2,140.9 274.5,141.3 272.6,141.6 C270.7,141.9 268.6,142.2 266.4,142.4 C264.1,142.6 261.7,142.7 259.2,142.7 C256.7,142.8 254.0,142.8 251.3,142.7 C248.6,142.6 245.8,142.4 243.0,142.2 C240.2,142.0 237.3,141.7 234.4,141.3 C231.6,140.9 228.7,140.5 225.9,140.0 C223.1,139.6 220.4,139.0 217.7,138.4 C215.1,137.8 212.5,137.2 210.1,136.5 C207.7,135.9 205.3,135.1 203.2,134.4 C201.1,133.6 199.1,132.9 197.4,132.1 C195.6,131.3 194.0,130.5 192.7,129.7 C191.3,128.9 190.2,128.0 189.3,127.2 C188.4,126.4 187.8,125.6 187.4,124.9 C187.0,124.1 186.8,123.3 186.9,122.6 C187.0,121.9 187.3,121.2 187.9,120.5 C188.5,119.9 189.3,119.3 190.4,118.7 C191.5,118.1 192.8,117.6 194.3,117.2 C195.8,116.7 197.5,116.3 199.4,116.0 C201.3,115.7 203.4,115.4 205.6,115.2 C207.9,115.0 210.3,114.9 212.8,114.9 C215.3,114.8 218.0,114.8 220.7,114.9 C223.4,115.0 226.2,115.2 229.0,115.4 C231.8,115.6 234.7,115.9 237.6,116.3 C240.4,116.7 243.3,117.1 246.1,117.6 C248.9,118.0 251.6,118.6 254.3,119.2 C256.9,119.8 259.5,120.4 261.9,121.1 C264.3,121.7 266.7,122.5 268.8,123.2 C270.9,124.0 272.9,124.7 274.6,125.5 C276.4,126.3 278.0,127.1 279.3,127.9 C280.7,128.7 281.8,129.6 282.7,130.4 C283.6,131.2 284.2,132.0 284.6,132.7 C285.0,133.5 285.2,134.3 285.1,135.0Z" fill="#3979df" stroke="#3270d0" stroke-width="0.8"/>
<path d="M250.2,118.3 C251.2,118.5 254.2,119.1 256.1,119.6 C257.9,120.0 259.8,120.5 261.6,121.0 C263.3,121.5 265.0,122.0 266.6,122.5 C268.3,123.0 269.8,123.6 271.3,124.1 C272.7,124.7 274.0,125.2 275.3,125.8 C276.5,126.4 277.7,127.0 278.7,127.6 C279.7,128.1 280.6,128.7 281.4,129.3 C282.2,129.9 282.9,130.5 283.4,131.1 C284.0,131.7 284.4,132.2 284.7,132.8 C285.0,133.4 285.1,133.9 285.1,134.5 C285.2,135.0 285.0,135.5 284.8,136.0 C284.6,136.5 283.9,137.2 283.7,137.5 L282.4,138.6 L283.5,137.2 L283.8,135.6 L283.4,134.0 L282.2,132.4 L280.2,130.7 L277.5,129.0 L274.2,127.3 L270.2,125.6 L265.7,124.0 L260.7,122.6 L255.3,121.2 L249.6,120.0Z" fill="#20498a"/>
<path d="M187.9,120.5 C188.3,120.2 189.2,119.4 190.1,118.9 C191.0,118.4 192.1,117.9 193.4,117.5 C194.7,117.0 196.1,116.6 197.7,116.3 C199.3,116.0 201.1,115.7 203.0,115.5 C204.9,115.3 207.0,115.1 209.1,115.0 C211.3,114.9 213.6,114.8 215.9,114.8 C218.2,114.8 220.7,114.9 223.2,115.0 C225.6,115.2 228.2,115.3 230.7,115.6 C233.3,115.8 235.9,116.1 238.4,116.4 C241.0,116.7 244.8,117.4 246.1,117.6" fill="none" stroke="#2b5fb4" stroke-width="1.1"/>
<path d="M189.7,117.2 L229.5,127.4 M238.5,129.6 L277,139.3" stroke="#24519f" stroke-width="1.5"/>
<path d="M224.6,137.2 L256,119" stroke="#2f68c4" stroke-width="0.8"/>
</svg>
<!-- Frequency dialog -->
<div class="dlg" id="freq" style="left:490px;top:107px;width:202px;height:258px;border:1px solid #9d9d9d;">
  <div class="tbar" style="height:30px;">
    <svg class="ticon" style="left:10.5px;top:5.5px" width="14" height="16" viewBox="0 0 14 16"><path d="M1.5,2 L4,0.5 L6,1.5 L6,14 L3.5,15.5 L1.5,14.5Z" fill="#2f5f8f"/><path d="M1.5,4.5 L6,2 M1.5,7.5 L6,5 M1.5,10.5 L6,8 M1.5,13.5 L6,11" stroke="#dfe8f2" stroke-width="1"/><rect x="8" y="4" width="4.5" height="1.6" fill="#44679a"/><rect x="8" y="7" width="4.5" height="1.6" fill="#44679a"/></svg>
    <span class="ttl" style="left:29.5px;top:7px;color:#8f8f8f;font-size:11.6px">Frequency (Hz)</span>
    <svg class="ticon" style="left:180px;top:9px" width="12" height="12" viewBox="0 0 12 12"><path d="M0.8,0.8 L11.2,11.2 M11.2,0.8 L0.8,11.2" stroke="#7a7a7a" stroke-width="1.1"/></svg>
  </div>
  <div class="list" style="left:0;top:30px;width:200px;height:192px;">
    <div class="row sel" style="top:0px"><span class="n">1</span><span class="v">5.111e+01</span></div>
    <div class="row" style="top:17px"><span class="n">2</span><span class="v">5.119e+01</span></div>
    <div class="row" style="top:34px"><span class="n">3</span><span class="v">5.319e+01</span></div>
    <div class="row" style="top:51px"><span class="n">4</span><span class="v">5.342e+01</span></div>
    <div class="row" style="top:68px"><span class="n">5</span><span class="v">5.472e+01</span></div>
    <div class="row" style="top:85px"><span class="n">6</span><span class="v">5.525e+01</span></div>
    <div class="row" style="top:102px"><span class="n">7</span><span class="v">5.654e+01</span></div>
    <div class="row" style="top:119px"><span class="n">8</span><span class="v">5.797e+01</span></div>
    <div class="row" style="top:136px"><span class="n">9</span><span class="v">5.825e+01</span></div>
  </div>
  <div class="btn" style="left:70px;top:229px;"><span class="q">?</span></div>
  <div class="btn" style="left:104px;top:229px;">
    <svg width="24" height="20" viewBox="0 0 24 20" style="position:absolute;left:0;top:0"><path d="M4,7 C9,6.6 14.5,8.5 19.2,13.4 L15.6,17.8 C12.5,14.3 8.5,12.8 4.6,12.6 C4.1,11 4,9 4,7 Z" fill="#4f7aa3"/><path d="M5.6,12.9 L7,7 M8.6,13.2 L10.6,7.6 M11.8,14.4 L14.3,9.4 M14.4,16.2 L18.6,13" stroke="#e1e1e1" stroke-width="0.8"/></svg>
  </div>
</div>

<!-- Legend panel -->
<div class="dlg" id="legend" style="left:752px;top:10px;width:128px;height:686px;border:1px solid #1883d7;">
  <div class="tbar" style="height:30px;">
    <svg class="ticon" style="left:10.5px;top:5.5px" width="14" height="16" viewBox="0 0 14 16"><path d="M1.5,2 L4,0.5 L6,1.5 L6,14 L3.5,15.5 L1.5,14.5Z" fill="#2f5f8f"/><path d="M1.5,4.5 L6,2 M1.5,7.5 L6,5 M1.5,10.5 L6,8 M1.5,13.5 L6,11" stroke="#dfe8f2" stroke-width="1"/><rect x="8" y="4" width="4.5" height="1.6" fill="#44679a"/><rect x="8" y="7" width="4.5" height="1.6" fill="#44679a"/></svg>
    <span class="ttl" style="left:29px;top:7px;color:#000;font-size:11.8px">Legend</span>
    <svg class="ticon" style="left:106px;top:9px" width="12" height="12" viewBox="0 0 12 12"><path d="M0.8,0.8 L11.2,11.2 M11.2,0.8 L0.8,11.2" stroke="#222" stroke-width="1.1"/></svg>
  </div>
  <div class="lt" style="top:34px">Displacement<br>Magnitude, mode<br>1, Freq.<br>5.111e+01 [Hz]</div>
  <div class="sunk" style="left:2px;top:101px;width:121px;height:14px;"><span class="mm" style="left:0;width:119px;top:1.5px;">Max&nbsp;&nbsp;1.000e+00</span></div>
  <div class="edit" style="left:2px;top:120.5px;width:121px;height:19px;"><span>9.167e-01</span></div>
  <div class="sw" style="top:141px;background:#ee3b3b"></div><div class="sw" style="top:156px;background:#ee753c"></div><div class="sw" style="top:171px;background:#ee933c"></div><div class="sw" style="top:186px;background:#eeaa3c"></div><div class="sw" style="top:201px;background:#eec23c"></div><div class="sw" style="top:216px;background:#c4cf50"></div><div class="sw" style="top:231px;background:#80e06e"></div><div class="sw" style="top:246px;background:#46d88e"></div><div class="sw" style="top:261px;background:#3cc8ae"></div><div class="sw" style="top:276px;background:#3ab2d8"></div><div class="sw" style="top:291px;background:#3a9cee"></div><div class="sw" style="top:306px;background:#3a7cee"></div><span class="lb" style="top:148px">9.167e-01</span><span class="lb" style="top:163px">8.333e-01</span><span class="lb" style="top:178px">7.500e-01</span><span class="lb" style="top:193px">6.667e-01</span><span class="lb" style="top:208px">5.833e-01</span><span class="lb" style="top:223px">5.000e-01</span><span class="lb" style="top:238px">4.167e-01</span><span class="lb" style="top:253px">3.333e-01</span><span class="lb" style="top:268px">2.500e-01</span><span class="lb" style="top:283px">1.667e-01</span><span class="lb" style="top:298px">8.333e-02</span>
  <div class="edit" style="left:2px;top:320.5px;width:121px;height:19px;"><span>8.333e-02</span></div>
  <div class="sunk" style="left:2px;top:344px;width:121px;height:14px;"><span class="mm" style="left:0;width:119px;top:1.5px;">Min&nbsp;&nbsp;2.573e-07</span></div>
  <!-- icons row -->
  <svg style="position:absolute;left:19px;top:368px" width="90" height="26" viewBox="0 0 90 26">
    <rect x="1" y="6.9" width="22.3" height="10.2" fill="none" stroke="#5b7fa6" stroke-width="1.8"/>
    <path d="M4.6,7 V10.6 M8.9,7 V12.8 M12.8,7 V10.6 M16.8,7 V12.8 M21,7 V10.6" stroke="#5b7fa6" stroke-width="1.9"/>
    <path d="M37,12 V8 C37,0.5 49,0.5 49,8 V12" fill="none" stroke="#cfd8e1" stroke-width="2.4"/>
    <rect x="33.6" y="11" width="19" height="12.5" rx="1.5" fill="#cfd8e1"/>
    <circle cx="43" cy="16" r="1.7" fill="#f0f0f0"/><rect x="42.2" y="16" width="1.6" height="4.5" fill="#f0f0f0"/>
    <path d="M62.6,18.6 C63.5,13 66,11 67.3,15 C68.6,19.5 70,20 71,14 C72,7.5 73,3.5 74,6.5 C74.6,9 75,10.5 75.4,11" fill="none" stroke="#1c3f73" stroke-width="1.4"/>
    <path d="M85,1.5 V10 L76.5,5.5 Z" fill="#1c3f73"/>
    <path d="M85,14.5 V24 L76.5,19 Z" fill="#4a6d99"/>
  </svg>
  <div class="grp" style="left:2px;top:404px;width:121px;height:45px;"></div><span class="gl" style="left:9px;top:398px;">Image</span>
  <div style="position:absolute;left:19px;top:418px;width:24px;height:24px;background:linear-gradient(90deg,#fff 0,#fff 7px,#5b7d9f 7px,#5b7d9f 16px,#1f4a7a 16px);"></div>
  <div style="position:absolute;left:47px;top:415px;width:31px;height:29px;border:1px solid #99c9f5;background:#c6e0f5;"></div>
  <div style="position:absolute;left:51px;top:419px;width:24px;height:24px;background:linear-gradient(90deg,#fff 0,#fff 3px,#dde3ea 3px,#dde3ea 6px,#b3c0ce 6px,#b3c0ce 9px,#8da1b8 9px,#8da1b8 12px,#6a85a4 12px,#6a85a4 15px,#44668f 15px,#44668f 18.8px,#1f4a7a 18.8px);"></div>
  <div style="position:absolute;left:81px;top:418px;width:24px;height:24px;background:linear-gradient(90deg,#fff 0,#fff 5px,#1f4a7a 18px,#1f4a7a 24px);"></div>
  <div class="grp" style="left:2px;top:456px;width:121px;height:94px;"></div><span class="gl" style="left:9px;top:451px;letter-spacing:-0.15px">Deformed shape</span>
  <svg style="position:absolute;left:38px;top:470px" width="60" height="30" viewBox="0 0 60 30">
    <path d="M3.1,25.7 C3.3,16 7,8.5 13.2,3.4 L19.2,8.1 C14,12 11.6,18 11.5,25.7 Z" fill="#5b7fa6"/>
    <path d="M3.2,21.8 L11.8,25.2 M4.2,15.7 L11.8,19.5 M6.9,10.5 L13.4,15.1 M13,3.4 L15.1,11" stroke="#f0f0f0" stroke-width="1.1"/>
    <path d="M27.9,8.5 H51.9" stroke="#1c4a80" stroke-width="1.5"/>
    <path d="M28.1,10.1 C36.5,9.6 44.5,13 50.7,18.6 L45.3,26 C41.5,21.5 35.5,18.6 28.7,18.6 C28.2,16 28.1,13 28.1,10.1 Z" fill="#5b7fa6"/>
    <path d="M29.1,18.2 L32.1,10.3 M34.5,18.9 L38.9,11.4 M39.6,20.3 L44.3,14.8 M43,22.8 L49.9,19" stroke="#f0f0f0" stroke-width="1.1"/>
    <path d="M50.4,11.2 V17.6 M48,16.4 H52.2" stroke="#1c4a80" stroke-width="1.4"/>
  </svg>
  <div class="grp" style="left:5px;top:504px;width:116px;height:43px;"></div>
  <svg style="position:absolute;left:14px;top:520px" width="26" height="20" viewBox="27.6 8.6 26 20">
    <path d="M28.1,10.1 C36.5,9.6 44.5,13 50.7,18.6 L45.3,26 C41.5,21.5 35.5,18.6 28.7,18.6 C28.2,16 28.1,13 28.1,10.1 Z" fill="#5b7fa6"/>
    <path d="M29.1,18.2 L32.1,10.3 M34.5,18.9 L38.9,11.4 M39.6,20.3 L44.3,14.8 M43,22.8 L49.9,19" stroke="#f0f0f0" stroke-width="1.1"/>
  </svg>
  <div class="trk" style="left:45px;top:523px;width:66px;"></div><div class="thm" style="left:73px;top:515px;"></div>
  <div class="grp" style="left:2px;top:558px;width:121px;height:99px;"></div><span class="gl" style="left:9.5px;top:552px;letter-spacing:-0.23px">Animation</span>
  <svg style="position:absolute;left:57px;top:579px" width="11" height="12" viewBox="0 0 11 12"><path d="M0.3,0.5 L10,5.5 L0.3,10.5Z" fill="#2b5d8c"/></svg>
  <div class="grp" style="left:5px;top:601px;width:116px;height:53px;"></div>
  <svg style="position:absolute;left:7px;top:603px" width="28" height="48" viewBox="0 0 28 48">
    <path d="M1,13.5 H25" stroke="#7a7a7a" stroke-width="1"/>
    <path d="M1,13.5 C2.3,-3 3.7,-3 5,13.5 C6.3,30 7.7,30 9,13.5 C10.3,-3 11.7,-3 13,13.5 C14.3,30 15.7,30 17,13.5 C18.3,-3 19.7,-3 21,13.5 C22.3,30 23.7,30 25,13.5" fill="none" stroke="#6e6e6e" stroke-width="1.1"/>
    <path d="M2,46 C6,36 13,29.5 24,29" fill="none" stroke="#6e6e6e" stroke-width="1.1"/>
    <path d="M1.5,41 H7.5 V32.5 H23.5" fill="none" stroke="#9a9a9a" stroke-width="1"/>
  </svg>
  <div class="trk" style="left:32px;top:613px;width:86px;"></div><div class="thm" style="left:70px;top:605px;"></div>
  <div class="trk" style="left:32px;top:637px;width:86px;"></div><div class="thm" style="left:70px;top:629px;"></div>
  <div class="btn" style="left:36px;top:659px;"><span class="q">?</span></div>
  <div class="btn" style="left:64px;top:659px;">
    <svg width="24" height="20" viewBox="0 0 24 20" style="position:absolute;left:0;top:0"><path d="M5,2.5 H19" stroke="#1c3f73" stroke-width="1.4"/><path d="M12,5 L15.5,9.5 H13.2 V13 H10.8 V9.5 H8.5 Z" fill="#1c3f73"/><rect x="5" y="13" width="14" height="4" fill="#0f2f6e"/></svg>
  </div>
</div>

</body></html>
